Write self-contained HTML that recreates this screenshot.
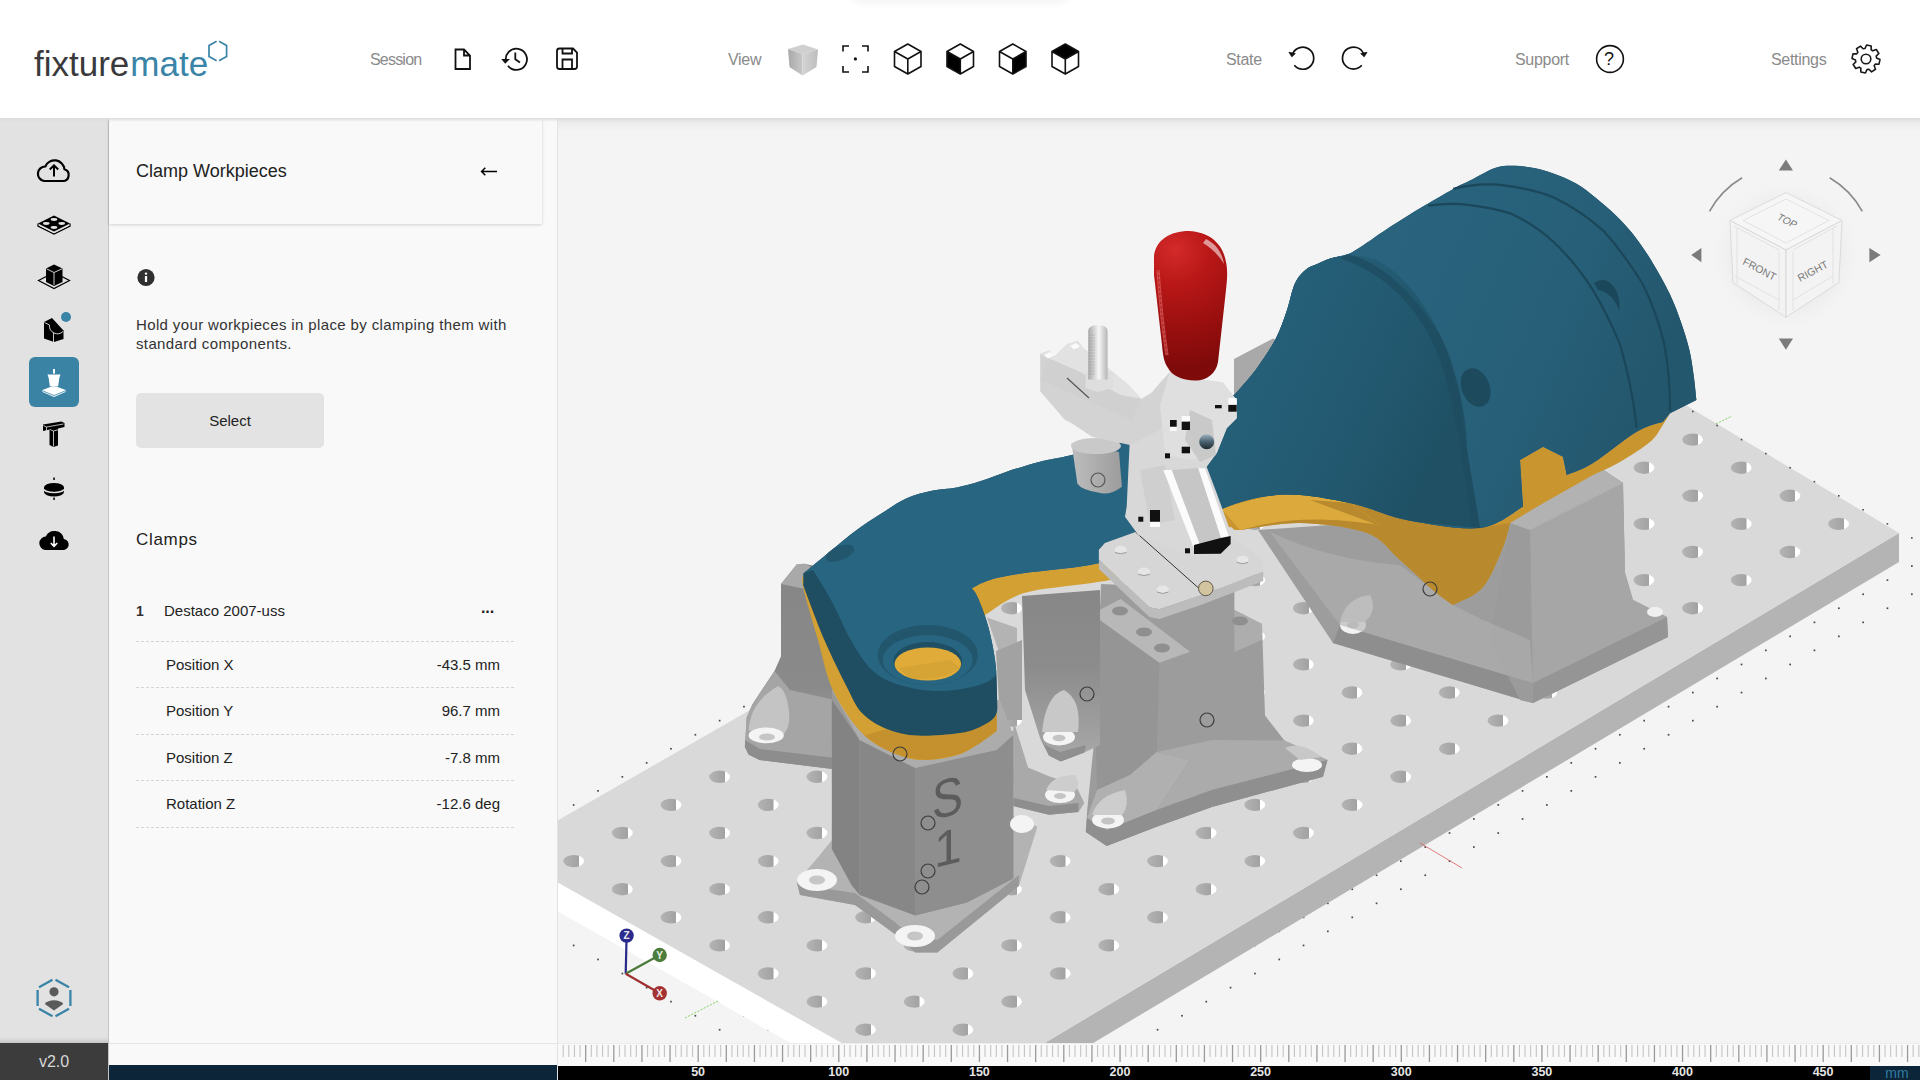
<!DOCTYPE html>
<html><head><meta charset="utf-8">
<style>
*{margin:0;padding:0;box-sizing:border-box}
html,body{width:1920px;height:1080px;overflow:hidden;background:#fff;font-family:"Liberation Sans",sans-serif;color:#222}
.abs{position:absolute}
#header{position:absolute;left:0;top:0;width:1920px;height:118px;background:#fff;z-index:5}
#hshadow{position:absolute;left:0;top:118px;width:1920px;height:4px;background:linear-gradient(#dcdcdc,rgba(0,0,0,0));z-index:6}
#vpshade{position:absolute;left:558px;top:118px;width:1362px;height:14px;background:linear-gradient(rgba(0,0,0,0.055),rgba(0,0,0,0));z-index:4}
#topdrop{position:absolute;left:850px;top:-14px;width:220px;height:14px;box-shadow:0 2px 9px rgba(0,0,0,0.06);border-radius:0 0 10px 10px;background:#fff;z-index:6}
.hl{position:absolute;top:50px;font-size:16px;color:#8a8a8a;line-height:20px;letter-spacing:-0.3px}
#side{position:absolute;left:0;top:118px;width:108px;height:925px;background:#e2e2e2}
#sideline{position:absolute;left:108px;top:118px;width:1px;height:962px;background:#c4c4c4}
#ver{position:absolute;left:0;top:1043px;width:108px;height:37px;background:#3c3c3c;color:#d8d8d8;font-size:16px;text-align:center;line-height:37px}
#panel{position:absolute;left:109px;top:118px;width:448px;height:962px;background:#f9f9f9}
#vp{position:absolute;left:558px;top:118px;width:1362px;height:962px;background:#f4f4f4;overflow:hidden}
#vline{position:absolute;left:557px;top:118px;width:1px;height:962px;background:#e2e2e2}
.t{position:absolute;white-space:nowrap}

</style></head><body>
<div id="header">
  <div class="t" style="left:34px;top:41.5px;font-size:35px;letter-spacing:0px;line-height:44px"><span id="fx" style="color:#3a3a3c">fixture</span><span id="mt" style="color:#3a84a8;margin-left:1px">mate</span></div>
  
  <svg class="abs" style="left:0;top:0" width="1920" height="118" viewBox="0 0 1920 118">
    <!-- logo hexagon -->
    <path d="M216.6,41.2 L209,45.6 V56.4 L216.6,60.8 M219,60.8 L226.6,56.4 V45.6 L219,41.2" fill="none" stroke="#3a84a8" stroke-width="1.7"/>
    <!-- doc -->
    <path d="M455.5,49.5 H464 L470,55.5 V69 H455.5 Z M464,49.5 V55.5 H470" fill="none" stroke="#111" stroke-width="1.8" stroke-linejoin="miter"/>
    <!-- history -->
    <path d="M506,61.5 A10.6,10.6 0 1 1 508,65.8" fill="none" stroke="#111" stroke-width="1.8"/>
    <path d="M502.5,59.5 L508.5,59.5 L505.3,62.8 Z" fill="#111" stroke="#111" stroke-width="1.2"/>
    <path d="M515.3,52.4 V59.3 L520,62.6" fill="none" stroke="#111" stroke-width="1.8"/>
    <!-- save -->
    <path d="M559.5,48.5 H573 L577,52.5 V66.5 A2.5,2.5 0 0 1 574.5,69 H559.5 A2.5,2.5 0 0 1 557,66.5 V51 A2.5,2.5 0 0 1 559.5,48.5 Z" fill="none" stroke="#111" stroke-width="1.8"/>
    <path d="M562.5,48.5 V53.5 H572 V48.5 M562.5,69 V59.5 H572 V69" fill="none" stroke="#111" stroke-width="1.8"/>
    <!-- gray cube -->
    <defs>
      <linearGradient id="cl" x1="0" x2="1"><stop offset="0" stop-color="#a8a8a8"/><stop offset="1" stop-color="#c8c8c8"/></linearGradient>
      <linearGradient id="cr" x1="0" x2="1"><stop offset="0" stop-color="#d4d4d4"/><stop offset="1" stop-color="#bdbdbd"/></linearGradient>
    </defs>
    <polygon points="788,49 803,44.5 818,49.5 802.5,54" fill="#cfcfcf"/>
    <polygon points="788,49 802.5,54 802.5,75.5 789.5,67" fill="url(#cl)"/>
    <polygon points="802.5,54 818,49.5 816.5,67 802.5,75.5" fill="url(#cr)"/>
    <!-- focus -->
    <path d="M843,51.5 V46 H849 M862,46 H868 V51.5 M843,66 V72 H849 M862,72 H868 V66" fill="none" stroke="#111" stroke-width="1.6"/>
    <circle cx="855.4" cy="58.9" r="1.6" fill="#111"/>
    <!-- wire cubes -->
    <g fill="none" stroke="#111" stroke-width="1.6" stroke-linejoin="round">
      <path d="M907.8,44 L921,51.5 L921,66.5 L907.8,74 L894.5,66.5 L894.5,51.5 Z M894.5,51.5 L907.8,59 L921,51.5 M907.8,59 V74"/>
    </g>
    <g transform="translate(52.5,0)">
      <path d="M894.5,51.5 L907.8,59 V74 L894.5,66.5 Z" fill="#000"/>
      <path d="M907.8,44 L921,51.5 L921,66.5 L907.8,74 L894.5,66.5 L894.5,51.5 Z M894.5,51.5 L907.8,59 L921,51.5 M907.8,59 V74" fill="none" stroke="#111" stroke-width="1.6" stroke-linejoin="round"/>
    </g>
    <g transform="translate(105,0)">
      <path d="M921,51.5 L907.8,59 V74 L921,66.5 Z" fill="#000"/>
      <path d="M907.8,44 L921,51.5 L921,66.5 L907.8,74 L894.5,66.5 L894.5,51.5 Z M894.5,51.5 L907.8,59 L921,51.5 M907.8,59 V74" fill="none" stroke="#111" stroke-width="1.6" stroke-linejoin="round"/>
    </g>
    <g transform="translate(157.5,0)">
      <path d="M907.8,44 L921,51.5 L907.8,59 L894.5,51.5 Z" fill="#000"/>
      <path d="M907.8,44 L921,51.5 L921,66.5 L907.8,74 L894.5,66.5 L894.5,51.5 Z M894.5,51.5 L907.8,59 L921,51.5 M907.8,59 V74" fill="none" stroke="#111" stroke-width="1.6" stroke-linejoin="round"/>
    </g>
    <!-- undo -->
    <path d="M1292.8,53.5 A11,11 0 1 1 1294.3,65.3" fill="none" stroke="#111" stroke-width="1.7"/>
    <path d="M1289,52.3 L1295.3,53.6 L1291.8,56.8 Z" fill="#111" stroke="#111" stroke-width="0.8" stroke-linejoin="round"/>
    <!-- redo -->
    <path d="M1363.5,53.5 A11,11 0 1 0 1361.8,65.3" fill="none" stroke="#111" stroke-width="1.7"/>
    <path d="M1367,52.3 L1360.7,53.6 L1364.2,56.8 Z" fill="#111" stroke="#111" stroke-width="0.8" stroke-linejoin="round"/>
    <!-- help -->
    <circle cx="1610" cy="59" r="13.4" fill="none" stroke="#111" stroke-width="1.6"/>
    <!-- gear -->
    <g transform="translate(1866,59)">
      <path id="gear" d="M10.56,-0.96 L13.99,0.55 L13.00,5.19 L9.25,5.17 L8.14,6.79 L9.50,10.28 L5.53,12.86 L2.89,10.20 L0.96,10.56 L-0.55,13.99 L-5.19,13.00 L-5.17,9.25 L-6.79,8.14 L-10.28,9.50 L-12.86,5.53 L-10.20,2.89 L-10.56,0.96 L-13.99,-0.55 L-13.00,-5.19 L-9.25,-5.17 L-8.14,-6.79 L-9.50,-10.28 L-5.53,-12.86 L-2.89,-10.20 L-0.96,-10.56 L0.55,-13.99 L5.19,-13.00 L5.17,-9.25 L6.79,-8.14 L10.28,-9.50 L12.86,-5.53 L10.20,-2.89 Z" fill="none" stroke="#1a1a1a" stroke-width="1.6" stroke-linejoin="round"/>
      <circle r="4.8" fill="none" stroke="#1a1a1a" stroke-width="1.6"/>
    </g>
  </svg>
  <div class="t" style="left:1604px;top:49px;font-size:18px;line-height:20px;color:#111">?</div>
  <div class="hl" style="left:370px;letter-spacing:-0.8px">Session</div>
  <div class="hl" style="left:728px">View</div>
  <div class="hl" style="left:1226px">State</div>
  <div class="hl" style="left:1515px">Support</div>
  <div class="hl" style="left:1771px">Settings</div>
</div>
<div id="hshadow"></div>
<div id="vpshade"></div>
<div id="topdrop"></div>
<div id="side"><svg class="abs" style="left:0;top:0" width="108" height="925" viewBox="0 118 108 925">
  <!-- cloud upload -->
  <path d="M44,181 H63 A6,6 0 0 0 64.5,169.3 A10,10 0 0 0 45.3,166.5 A7.3,7.3 0 0 0 44,181 Z" fill="none" stroke="#000" stroke-width="2.2" stroke-linejoin="round"/>
  <path d="M54,176.5 V165.5 M49.8,169.5 L54,165.3 L58.2,169.5" fill="none" stroke="#000" stroke-width="2"/>
  <!-- plate -->
  <path d="M38,223.5 L54,215.5 L70,223.5 L54,231.5 Z" fill="#000"/>
  <path d="M38,223.5 V226 L54,234 L70,226 V223.5" fill="none" stroke="#000" stroke-width="1.3"/>
  <path d="M38.5,225 L54,232.8 L69.5,225" fill="none" stroke="#e2e2e2" stroke-width="0.8"/>
  <ellipse cx="54" cy="219.5" rx="3.3" ry="1.4" fill="#e2e2e2"/>
  <ellipse cx="54" cy="227.5" rx="3.3" ry="1.4" fill="#e2e2e2"/>
  <ellipse cx="46.3" cy="223.5" rx="3.3" ry="1.4" fill="#e2e2e2"/>
  <ellipse cx="61.7" cy="223.5" rx="3.3" ry="1.4" fill="#e2e2e2"/>
  <!-- cube on plate -->
  <path d="M38.5,280.5 L54,272.5 L69.5,280.5 L54,288.5 Z" fill="none" stroke="#000" stroke-width="1.2"/>
  <path d="M46,268.5 L54,264.5 L62.5,268.5 V282 L54,286 L46,282 Z" fill="#000"/>
  <path d="M46.5,268.8 L54,272.5 L62,268.8 M54,272.5 V285" fill="none" stroke="#e2e2e2" stroke-width="0.9"/>
  <!-- workpiece -->
  <path d="M44,322 L52,318 L63.5,330.5 V339 L54,342 L44,338.5 Z" fill="#000"/>
  <path d="M44.5,322.5 L49.5,325 A8,8 0 0 0 63,331.5 M53.5,333 V342" fill="none" stroke="#e2e2e2" stroke-width="0.9"/>
  <circle cx="66" cy="317" r="5" fill="#3a84a8"/>
  <!-- active -->
  <rect x="29" y="357" width="50" height="50" rx="6" fill="#3a83a5"/>
  <path d="M53,369 H55 V373.5 H53 Z" fill="#fff"/>
  <path d="M47.5,374.5 H60.5 L59.3,378 L58.2,386 A5,1.8 0 0 1 49.8,386 L48.7,378 Z" fill="#fff"/>
  <path d="M42.5,390 L51.5,386.5 A6,1.8 0 0 0 56.5,386.5 L65.5,390 V392 L54,397 L42.5,392 Z" fill="#fff"/>
  <path d="M43,391 L54,395.5 L65,391" fill="none" stroke="#3a83a5" stroke-width="0.8"/>
  <!-- T -->
  <path d="M43,424.5 L61.5,421.5 L64.5,423 V427 L58,428.5 V445.5 L53.5,447 L49.5,445 V429.5 L43,431 Z" fill="#000"/>
  <path d="M43.5,425.5 L46.5,427 L63.5,424 M46.5,427 V430.5 M49.8,429.5 L53.5,431 V446.5 M53.5,431 L58,429.8" fill="none" stroke="#e2e2e2" stroke-width="0.8"/>
  <!-- disk -->
  <rect x="53.3" y="477.5" width="1.5" height="2.5" fill="#000"/>
  <rect x="53.3" y="497.5" width="1.5" height="2.5" fill="#000"/>
  <path d="M44,487.3 A10,4.3 0 0 1 64,487.3 V492 A10,4.6 0 0 1 44,492 Z" fill="#000"/>
  <path d="M44.2,489.2 A9.8,3.3 0 0 0 63.8,489.2" fill="none" stroke="#e2e2e2" stroke-width="1.6"/>
  <rect x="53.3" y="489" width="1.5" height="2.5" fill="#000"/>
  <!-- cloud download -->
  <path d="M45,550 H62.5 A5.5,5.5 0 0 0 63.8,539 A9.5,9.5 0 0 0 45.8,536.5 A6.8,6.8 0 0 0 45,550 Z" fill="#000"/>
  <path d="M54,536.5 V546 M50.8,543 L54,546.3 L57.2,543" fill="none" stroke="#fff" stroke-width="1.6"/>
  <!-- user hex -->
  <path d="M55.5,979.8 L69,987.3 M70.4,990 V1006 M69,1008.7 L55.5,1016.2 M52.5,1016.2 L39,1008.7 M37.6,1006 V990 M39,987.3 L52.5,979.8" fill="none" stroke="#3a84a8" stroke-width="2.3"/>
  <circle cx="54" cy="991.8" r="4.6" fill="#5a5a5a"/>
  <path d="M44.8,1004 A10.5,7 0 0 1 63.2,1004 L54,1010.5 Z" fill="#5a5a5a"/>
</svg></div>
<div id="sidesh" class="abs" style="left:0;top:1037px;width:108px;height:6px;background:linear-gradient(rgba(0,0,0,0),rgba(0,0,0,0.12))"></div>
<div id="sideline"></div>
<div id="ver">v2.0</div>
<div id="panel">
  <div class="abs" style="left:0;top:0;width:433px;height:106px;background:#f9f9f9;box-shadow:0 1px 3px rgba(0,0,0,0.16)"></div>
  <div class="t" style="left:27px;top:42px;font-size:18px;line-height:22px;color:#222">Clamp Workpieces</div>
  <svg class="abs" style="left:370px;top:45px" width="22" height="16"><path d="M2.5,8.5 H18 M6.3,4.8 L2.5,8.5 L6.3,12.3" fill="none" stroke="#000" stroke-width="1.4"/></svg>
  <svg class="abs" style="left:27px;top:150px" width="20" height="20"><circle cx="10" cy="9.5" r="8.6" fill="#303030"/><rect x="8.9" y="8" width="2.2" height="6" fill="#fff"/><circle cx="10" cy="5.6" r="1.2" fill="#fff"/></svg>
  <div class="t" style="left:27px;top:197px;font-size:15px;line-height:19px;color:#333;letter-spacing:0.37px">Hold your workpieces in place by clamping them with<br>standard components.</div>
  <div class="abs" style="left:27px;top:275px;width:188px;height:55px;background:#e3e3e3;border-radius:5px;font-size:15px;line-height:55px;text-align:center;color:#222">Select</div>
  <div class="t" style="left:27px;top:411px;font-size:17px;line-height:22px;color:#222;letter-spacing:0.7px">Clamps</div>
  <div class="t" style="left:27px;top:484px;font-size:14px;line-height:18px;color:#333;font-weight:bold">1</div>
  <div class="t" style="left:55px;top:484px;font-size:15px;line-height:18px;color:#222">Destaco 2007-uss</div>
  <div class="t" style="left:372px;top:484.5px;font-size:16px;line-height:18px;color:#222;letter-spacing:-1px;font-weight:bold">···</div>
  <div class="abs" style="left:27px;top:523px;width:378px;border-top:1px dashed #d4d4d4"></div>
  <div class="t" style="left:57px;top:538px;font-size:15px;line-height:18px;color:#222">Position X</div>
  <div class="t" style="right:57px;top:538px;font-size:15px;line-height:18px;color:#222">-43.5 mm</div>
  <div class="abs" style="left:27px;top:569px;width:378px;border-top:1px dashed #d4d4d4"></div>
  <div class="t" style="left:57px;top:584px;font-size:15px;line-height:18px;color:#222">Position Y</div>
  <div class="t" style="right:57px;top:584px;font-size:15px;line-height:18px;color:#222">96.7 mm</div>
  <div class="abs" style="left:27px;top:616px;width:378px;border-top:1px dashed #d4d4d4"></div>
  <div class="t" style="left:57px;top:631px;font-size:15px;line-height:18px;color:#222">Position Z</div>
  <div class="t" style="right:57px;top:631px;font-size:15px;line-height:18px;color:#222">-7.8 mm</div>
  <div class="abs" style="left:27px;top:662px;width:378px;border-top:1px dashed #d4d4d4"></div>
  <div class="t" style="left:57px;top:677px;font-size:15px;line-height:18px;color:#222">Rotation Z</div>
  <div class="t" style="right:57px;top:677px;font-size:15px;line-height:18px;color:#222">-12.6 deg</div>
  <div class="abs" style="left:27px;top:709px;width:378px;border-top:1px dashed #d4d4d4"></div>
  <div class="abs" style="left:0;top:925px;width:448px;height:1px;background:#e6e6e6"></div>
  <div class="abs" style="left:0;top:947px;width:448px;height:15px;background:#0c2538"></div>
</div>
<div id="vline"></div>
<div id="vp"><svg style="position:absolute;left:0;top:0" width="1362" height="925" viewBox="558 118 1362 925">
<defs>
<linearGradient id="hole" x1="0" x2="1"><stop offset="0" stop-color="#b4b4b4"/><stop offset="0.75" stop-color="#a2a2a2"/><stop offset="0.76" stop-color="#ffffff"/><stop offset="1" stop-color="#ffffff"/></linearGradient>
</defs>
<g fill="#4a4a4a"><rect x="1473.0" y="284.2" width="1.7" height="1.7"/><rect x="1448.7" y="298.3" width="1.7" height="1.7"/><rect x="1911.0" y="565.2" width="1.7" height="1.7"/><rect x="1424.4" y="312.3" width="1.7" height="1.7"/><rect x="1886.6" y="579.3" width="1.7" height="1.7"/><rect x="1911.0" y="593.4" width="1.7" height="1.7"/><rect x="1400.0" y="326.4" width="1.7" height="1.7"/><rect x="1862.3" y="593.4" width="1.7" height="1.7"/><rect x="1886.6" y="607.4" width="1.7" height="1.7"/><rect x="1375.7" y="340.4" width="1.7" height="1.7"/><rect x="1838.0" y="607.4" width="1.7" height="1.7"/><rect x="1862.3" y="621.5" width="1.7" height="1.7"/><rect x="1351.4" y="354.5" width="1.7" height="1.7"/><rect x="1813.6" y="621.5" width="1.7" height="1.7"/><rect x="1838.0" y="635.5" width="1.7" height="1.7"/><rect x="1327.0" y="368.5" width="1.7" height="1.7"/><rect x="1789.3" y="635.5" width="1.7" height="1.7"/><rect x="1813.6" y="649.5" width="1.7" height="1.7"/><rect x="1302.7" y="382.6" width="1.7" height="1.7"/><rect x="1765.0" y="649.5" width="1.7" height="1.7"/><rect x="1789.3" y="663.6" width="1.7" height="1.7"/><rect x="1278.4" y="396.6" width="1.7" height="1.7"/><rect x="1740.7" y="663.6" width="1.7" height="1.7"/><rect x="1765.0" y="677.6" width="1.7" height="1.7"/><rect x="1254.1" y="410.7" width="1.7" height="1.7"/><rect x="1716.3" y="677.6" width="1.7" height="1.7"/><rect x="1740.7" y="691.7" width="1.7" height="1.7"/><rect x="1229.7" y="424.7" width="1.7" height="1.7"/><rect x="1692.0" y="691.7" width="1.7" height="1.7"/><rect x="1716.3" y="705.8" width="1.7" height="1.7"/><rect x="1205.4" y="438.8" width="1.7" height="1.7"/><rect x="1667.7" y="705.8" width="1.7" height="1.7"/><rect x="1692.0" y="719.8" width="1.7" height="1.7"/><rect x="1181.1" y="452.8" width="1.7" height="1.7"/><rect x="1643.3" y="719.8" width="1.7" height="1.7"/><rect x="1667.7" y="733.9" width="1.7" height="1.7"/><rect x="1156.7" y="466.9" width="1.7" height="1.7"/><rect x="1619.0" y="733.9" width="1.7" height="1.7"/><rect x="1643.3" y="747.9" width="1.7" height="1.7"/><rect x="1132.4" y="480.9" width="1.7" height="1.7"/><rect x="1594.7" y="747.9" width="1.7" height="1.7"/><rect x="1619.0" y="762.0" width="1.7" height="1.7"/><rect x="1108.1" y="495.0" width="1.7" height="1.7"/><rect x="1570.4" y="762.0" width="1.7" height="1.7"/><rect x="1594.7" y="776.0" width="1.7" height="1.7"/><rect x="1083.8" y="509.0" width="1.7" height="1.7"/><rect x="1546.0" y="776.0" width="1.7" height="1.7"/><rect x="1570.4" y="790.0" width="1.7" height="1.7"/><rect x="1059.4" y="523.1" width="1.7" height="1.7"/><rect x="1521.7" y="790.0" width="1.7" height="1.7"/><rect x="1546.0" y="804.1" width="1.7" height="1.7"/><rect x="1035.1" y="537.1" width="1.7" height="1.7"/><rect x="1497.4" y="804.1" width="1.7" height="1.7"/><rect x="1521.7" y="818.1" width="1.7" height="1.7"/><rect x="1010.8" y="551.2" width="1.7" height="1.7"/><rect x="1473.0" y="818.1" width="1.7" height="1.7"/><rect x="1497.4" y="832.2" width="1.7" height="1.7"/><rect x="986.4" y="565.2" width="1.7" height="1.7"/><rect x="1448.7" y="832.2" width="1.7" height="1.7"/><rect x="1473.0" y="846.2" width="1.7" height="1.7"/><rect x="962.1" y="579.3" width="1.7" height="1.7"/><rect x="1424.4" y="846.2" width="1.7" height="1.7"/><rect x="1448.7" y="860.3" width="1.7" height="1.7"/><rect x="937.8" y="593.4" width="1.7" height="1.7"/><rect x="1400.0" y="860.3" width="1.7" height="1.7"/><rect x="1424.4" y="874.4" width="1.7" height="1.7"/><rect x="913.4" y="607.4" width="1.7" height="1.7"/><rect x="1375.7" y="874.4" width="1.7" height="1.7"/><rect x="1400.0" y="888.4" width="1.7" height="1.7"/><rect x="889.1" y="621.5" width="1.7" height="1.7"/><rect x="1351.4" y="888.4" width="1.7" height="1.7"/><rect x="1375.7" y="902.5" width="1.7" height="1.7"/><rect x="864.8" y="635.5" width="1.7" height="1.7"/><rect x="1327.0" y="902.5" width="1.7" height="1.7"/><rect x="1351.4" y="916.5" width="1.7" height="1.7"/><rect x="840.5" y="649.5" width="1.7" height="1.7"/><rect x="1302.7" y="916.5" width="1.7" height="1.7"/><rect x="1327.0" y="930.5" width="1.7" height="1.7"/><rect x="816.1" y="663.6" width="1.7" height="1.7"/><rect x="1278.4" y="930.5" width="1.7" height="1.7"/><rect x="1302.7" y="944.6" width="1.7" height="1.7"/><rect x="791.8" y="677.6" width="1.7" height="1.7"/><rect x="1254.1" y="944.6" width="1.7" height="1.7"/><rect x="1278.4" y="958.6" width="1.7" height="1.7"/><rect x="767.5" y="691.7" width="1.7" height="1.7"/><rect x="1229.7" y="958.6" width="1.7" height="1.7"/><rect x="1254.1" y="972.7" width="1.7" height="1.7"/><rect x="743.1" y="705.8" width="1.7" height="1.7"/><rect x="1205.4" y="972.7" width="1.7" height="1.7"/><rect x="1229.7" y="986.8" width="1.7" height="1.7"/><rect x="718.8" y="719.8" width="1.7" height="1.7"/><rect x="1181.1" y="986.8" width="1.7" height="1.7"/><rect x="1205.4" y="1000.8" width="1.7" height="1.7"/><rect x="694.5" y="733.9" width="1.7" height="1.7"/><rect x="1156.7" y="1000.8" width="1.7" height="1.7"/><rect x="1181.1" y="1014.9" width="1.7" height="1.7"/><rect x="670.1" y="747.9" width="1.7" height="1.7"/><rect x="1132.4" y="1014.9" width="1.7" height="1.7"/><rect x="1156.7" y="1028.9" width="1.7" height="1.7"/><rect x="645.8" y="762.0" width="1.7" height="1.7"/><rect x="1108.1" y="1028.9" width="1.7" height="1.7"/><rect x="621.5" y="776.0" width="1.7" height="1.7"/><rect x="597.2" y="790.0" width="1.7" height="1.7"/><rect x="572.8" y="804.1" width="1.7" height="1.7"/><rect x="572.8" y="916.5" width="1.7" height="1.7"/><rect x="597.2" y="930.5" width="1.7" height="1.7"/><rect x="572.8" y="944.6" width="1.7" height="1.7"/><rect x="621.5" y="944.6" width="1.7" height="1.7"/><rect x="597.2" y="958.6" width="1.7" height="1.7"/><rect x="645.8" y="958.6" width="1.7" height="1.7"/><rect x="621.5" y="972.7" width="1.7" height="1.7"/><rect x="670.1" y="972.7" width="1.7" height="1.7"/><rect x="645.8" y="986.8" width="1.7" height="1.7"/><rect x="694.5" y="986.8" width="1.7" height="1.7"/><rect x="670.1" y="1000.8" width="1.7" height="1.7"/><rect x="718.8" y="1000.8" width="1.7" height="1.7"/><rect x="694.5" y="1014.9" width="1.7" height="1.7"/><rect x="743.1" y="1014.9" width="1.7" height="1.7"/><rect x="718.8" y="1028.9" width="1.7" height="1.7"/><rect x="767.5" y="1028.9" width="1.7" height="1.7"/></g>
<polygon points="503.3,851.7 946.0,1101.9 946.0,1130.9 503.3,880.7" fill="#ffffff" />
<polygon points="946.0,1101.9 1899.0,533.0 1899.0,562.0 946.0,1130.9" fill="#b4b4b4" />
<polygon points="503.3,851.7 1488.0,286.5 1899.0,533.0 946.0,1101.9" fill="#d9d9d9" />
<ellipse cx="1498.0" cy="327.2" rx="10.4" ry="6.2" fill="url(#hole)"/>
<ellipse cx="1449.3" cy="355.3" rx="10.4" ry="6.2" fill="url(#hole)"/>
<ellipse cx="1400.7" cy="383.4" rx="10.4" ry="6.2" fill="url(#hole)"/>
<ellipse cx="1352.0" cy="411.5" rx="10.4" ry="6.2" fill="url(#hole)"/>
<ellipse cx="1303.4" cy="439.6" rx="10.4" ry="6.2" fill="url(#hole)"/>
<ellipse cx="1254.8" cy="467.7" rx="10.4" ry="6.2" fill="url(#hole)"/>
<ellipse cx="1206.1" cy="495.8" rx="10.4" ry="6.2" fill="url(#hole)"/>
<ellipse cx="1157.5" cy="523.9" rx="10.4" ry="6.2" fill="url(#hole)"/>
<ellipse cx="1108.8" cy="552.0" rx="10.4" ry="6.2" fill="url(#hole)"/>
<ellipse cx="1060.2" cy="580.1" rx="10.4" ry="6.2" fill="url(#hole)"/>
<ellipse cx="1011.5" cy="608.2" rx="10.4" ry="6.2" fill="url(#hole)"/>
<ellipse cx="962.9" cy="636.3" rx="10.4" ry="6.2" fill="url(#hole)"/>
<ellipse cx="914.2" cy="664.4" rx="10.4" ry="6.2" fill="url(#hole)"/>
<ellipse cx="865.5" cy="692.5" rx="10.4" ry="6.2" fill="url(#hole)"/>
<ellipse cx="816.9" cy="720.6" rx="10.4" ry="6.2" fill="url(#hole)"/>
<ellipse cx="768.2" cy="748.7" rx="10.4" ry="6.2" fill="url(#hole)"/>
<ellipse cx="719.6" cy="776.8" rx="10.4" ry="6.2" fill="url(#hole)"/>
<ellipse cx="671.0" cy="804.9" rx="10.4" ry="6.2" fill="url(#hole)"/>
<ellipse cx="622.3" cy="833.0" rx="10.4" ry="6.2" fill="url(#hole)"/>
<ellipse cx="573.7" cy="861.1" rx="10.4" ry="6.2" fill="url(#hole)"/>
<ellipse cx="1546.7" cy="355.3" rx="10.4" ry="6.2" fill="url(#hole)"/>
<ellipse cx="1498.0" cy="383.4" rx="10.4" ry="6.2" fill="url(#hole)"/>
<ellipse cx="1449.3" cy="411.5" rx="10.4" ry="6.2" fill="url(#hole)"/>
<ellipse cx="1400.7" cy="439.6" rx="10.4" ry="6.2" fill="url(#hole)"/>
<ellipse cx="1352.0" cy="467.7" rx="10.4" ry="6.2" fill="url(#hole)"/>
<ellipse cx="1303.4" cy="495.8" rx="10.4" ry="6.2" fill="url(#hole)"/>
<ellipse cx="1254.8" cy="523.9" rx="10.4" ry="6.2" fill="url(#hole)"/>
<ellipse cx="1206.1" cy="552.0" rx="10.4" ry="6.2" fill="url(#hole)"/>
<ellipse cx="1157.5" cy="580.1" rx="10.4" ry="6.2" fill="url(#hole)"/>
<ellipse cx="1108.8" cy="608.2" rx="10.4" ry="6.2" fill="url(#hole)"/>
<ellipse cx="1060.2" cy="636.3" rx="10.4" ry="6.2" fill="url(#hole)"/>
<ellipse cx="1011.5" cy="664.4" rx="10.4" ry="6.2" fill="url(#hole)"/>
<ellipse cx="962.9" cy="692.5" rx="10.4" ry="6.2" fill="url(#hole)"/>
<ellipse cx="914.2" cy="720.6" rx="10.4" ry="6.2" fill="url(#hole)"/>
<ellipse cx="865.5" cy="748.7" rx="10.4" ry="6.2" fill="url(#hole)"/>
<ellipse cx="816.9" cy="776.8" rx="10.4" ry="6.2" fill="url(#hole)"/>
<ellipse cx="768.2" cy="804.9" rx="10.4" ry="6.2" fill="url(#hole)"/>
<ellipse cx="719.6" cy="833.0" rx="10.4" ry="6.2" fill="url(#hole)"/>
<ellipse cx="671.0" cy="861.1" rx="10.4" ry="6.2" fill="url(#hole)"/>
<ellipse cx="622.3" cy="889.2" rx="10.4" ry="6.2" fill="url(#hole)"/>
<ellipse cx="1595.3" cy="383.4" rx="10.4" ry="6.2" fill="url(#hole)"/>
<ellipse cx="1546.7" cy="411.5" rx="10.4" ry="6.2" fill="url(#hole)"/>
<ellipse cx="1498.0" cy="439.6" rx="10.4" ry="6.2" fill="url(#hole)"/>
<ellipse cx="1449.3" cy="467.7" rx="10.4" ry="6.2" fill="url(#hole)"/>
<ellipse cx="1400.7" cy="495.8" rx="10.4" ry="6.2" fill="url(#hole)"/>
<ellipse cx="1352.0" cy="523.9" rx="10.4" ry="6.2" fill="url(#hole)"/>
<ellipse cx="1303.4" cy="552.0" rx="10.4" ry="6.2" fill="url(#hole)"/>
<ellipse cx="1254.8" cy="580.1" rx="10.4" ry="6.2" fill="url(#hole)"/>
<ellipse cx="1206.1" cy="608.2" rx="10.4" ry="6.2" fill="url(#hole)"/>
<ellipse cx="1157.5" cy="636.3" rx="10.4" ry="6.2" fill="url(#hole)"/>
<ellipse cx="1108.8" cy="664.4" rx="10.4" ry="6.2" fill="url(#hole)"/>
<ellipse cx="1060.2" cy="692.5" rx="10.4" ry="6.2" fill="url(#hole)"/>
<ellipse cx="1011.5" cy="720.6" rx="10.4" ry="6.2" fill="url(#hole)"/>
<ellipse cx="962.8" cy="748.7" rx="10.4" ry="6.2" fill="url(#hole)"/>
<ellipse cx="914.2" cy="776.8" rx="10.4" ry="6.2" fill="url(#hole)"/>
<ellipse cx="865.5" cy="804.9" rx="10.4" ry="6.2" fill="url(#hole)"/>
<ellipse cx="816.9" cy="833.0" rx="10.4" ry="6.2" fill="url(#hole)"/>
<ellipse cx="768.2" cy="861.1" rx="10.4" ry="6.2" fill="url(#hole)"/>
<ellipse cx="719.6" cy="889.2" rx="10.4" ry="6.2" fill="url(#hole)"/>
<ellipse cx="671.0" cy="917.3" rx="10.4" ry="6.2" fill="url(#hole)"/>
<ellipse cx="1643.9" cy="411.5" rx="10.4" ry="6.2" fill="url(#hole)"/>
<ellipse cx="1595.3" cy="439.6" rx="10.4" ry="6.2" fill="url(#hole)"/>
<ellipse cx="1546.7" cy="467.7" rx="10.4" ry="6.2" fill="url(#hole)"/>
<ellipse cx="1498.0" cy="495.8" rx="10.4" ry="6.2" fill="url(#hole)"/>
<ellipse cx="1449.3" cy="523.9" rx="10.4" ry="6.2" fill="url(#hole)"/>
<ellipse cx="1400.7" cy="552.0" rx="10.4" ry="6.2" fill="url(#hole)"/>
<ellipse cx="1352.0" cy="580.1" rx="10.4" ry="6.2" fill="url(#hole)"/>
<ellipse cx="1303.4" cy="608.2" rx="10.4" ry="6.2" fill="url(#hole)"/>
<ellipse cx="1254.8" cy="636.3" rx="10.4" ry="6.2" fill="url(#hole)"/>
<ellipse cx="1206.1" cy="664.4" rx="10.4" ry="6.2" fill="url(#hole)"/>
<ellipse cx="1157.4" cy="692.5" rx="10.4" ry="6.2" fill="url(#hole)"/>
<ellipse cx="1108.8" cy="720.6" rx="10.4" ry="6.2" fill="url(#hole)"/>
<ellipse cx="1060.1" cy="748.7" rx="10.4" ry="6.2" fill="url(#hole)"/>
<ellipse cx="1011.5" cy="776.8" rx="10.4" ry="6.2" fill="url(#hole)"/>
<ellipse cx="962.8" cy="804.9" rx="10.4" ry="6.2" fill="url(#hole)"/>
<ellipse cx="914.2" cy="833.0" rx="10.4" ry="6.2" fill="url(#hole)"/>
<ellipse cx="865.5" cy="861.1" rx="10.4" ry="6.2" fill="url(#hole)"/>
<ellipse cx="816.9" cy="889.2" rx="10.4" ry="6.2" fill="url(#hole)"/>
<ellipse cx="768.2" cy="917.3" rx="10.4" ry="6.2" fill="url(#hole)"/>
<ellipse cx="719.6" cy="945.4" rx="10.4" ry="6.2" fill="url(#hole)"/>
<ellipse cx="1692.6" cy="439.6" rx="10.4" ry="6.2" fill="url(#hole)"/>
<ellipse cx="1644.0" cy="467.7" rx="10.4" ry="6.2" fill="url(#hole)"/>
<ellipse cx="1595.3" cy="495.8" rx="10.4" ry="6.2" fill="url(#hole)"/>
<ellipse cx="1546.7" cy="523.9" rx="10.4" ry="6.2" fill="url(#hole)"/>
<ellipse cx="1498.0" cy="552.0" rx="10.4" ry="6.2" fill="url(#hole)"/>
<ellipse cx="1449.3" cy="580.1" rx="10.4" ry="6.2" fill="url(#hole)"/>
<ellipse cx="1400.7" cy="608.2" rx="10.4" ry="6.2" fill="url(#hole)"/>
<ellipse cx="1352.0" cy="636.3" rx="10.4" ry="6.2" fill="url(#hole)"/>
<ellipse cx="1303.4" cy="664.4" rx="10.4" ry="6.2" fill="url(#hole)"/>
<ellipse cx="1254.8" cy="692.5" rx="10.4" ry="6.2" fill="url(#hole)"/>
<ellipse cx="1206.1" cy="720.6" rx="10.4" ry="6.2" fill="url(#hole)"/>
<ellipse cx="1157.5" cy="748.7" rx="10.4" ry="6.2" fill="url(#hole)"/>
<ellipse cx="1108.8" cy="776.8" rx="10.4" ry="6.2" fill="url(#hole)"/>
<ellipse cx="1060.2" cy="804.9" rx="10.4" ry="6.2" fill="url(#hole)"/>
<ellipse cx="1011.5" cy="833.0" rx="10.4" ry="6.2" fill="url(#hole)"/>
<ellipse cx="962.9" cy="861.1" rx="10.4" ry="6.2" fill="url(#hole)"/>
<ellipse cx="914.2" cy="889.2" rx="10.4" ry="6.2" fill="url(#hole)"/>
<ellipse cx="865.6" cy="917.3" rx="10.4" ry="6.2" fill="url(#hole)"/>
<ellipse cx="816.9" cy="945.4" rx="10.4" ry="6.2" fill="url(#hole)"/>
<ellipse cx="768.2" cy="973.5" rx="10.4" ry="6.2" fill="url(#hole)"/>
<ellipse cx="1741.2" cy="467.7" rx="10.4" ry="6.2" fill="url(#hole)"/>
<ellipse cx="1692.6" cy="495.8" rx="10.4" ry="6.2" fill="url(#hole)"/>
<ellipse cx="1644.0" cy="523.9" rx="10.4" ry="6.2" fill="url(#hole)"/>
<ellipse cx="1595.3" cy="552.0" rx="10.4" ry="6.2" fill="url(#hole)"/>
<ellipse cx="1546.7" cy="580.1" rx="10.4" ry="6.2" fill="url(#hole)"/>
<ellipse cx="1498.0" cy="608.2" rx="10.4" ry="6.2" fill="url(#hole)"/>
<ellipse cx="1449.3" cy="636.3" rx="10.4" ry="6.2" fill="url(#hole)"/>
<ellipse cx="1400.7" cy="664.4" rx="10.4" ry="6.2" fill="url(#hole)"/>
<ellipse cx="1352.0" cy="692.5" rx="10.4" ry="6.2" fill="url(#hole)"/>
<ellipse cx="1303.4" cy="720.6" rx="10.4" ry="6.2" fill="url(#hole)"/>
<ellipse cx="1254.8" cy="748.7" rx="10.4" ry="6.2" fill="url(#hole)"/>
<ellipse cx="1206.1" cy="776.8" rx="10.4" ry="6.2" fill="url(#hole)"/>
<ellipse cx="1157.5" cy="804.9" rx="10.4" ry="6.2" fill="url(#hole)"/>
<ellipse cx="1108.8" cy="833.0" rx="10.4" ry="6.2" fill="url(#hole)"/>
<ellipse cx="1060.2" cy="861.1" rx="10.4" ry="6.2" fill="url(#hole)"/>
<ellipse cx="1011.5" cy="889.2" rx="10.4" ry="6.2" fill="url(#hole)"/>
<ellipse cx="962.9" cy="917.3" rx="10.4" ry="6.2" fill="url(#hole)"/>
<ellipse cx="914.2" cy="945.4" rx="10.4" ry="6.2" fill="url(#hole)"/>
<ellipse cx="865.6" cy="973.5" rx="10.4" ry="6.2" fill="url(#hole)"/>
<ellipse cx="816.9" cy="1001.6" rx="10.4" ry="6.2" fill="url(#hole)"/>
<ellipse cx="1789.9" cy="495.8" rx="10.4" ry="6.2" fill="url(#hole)"/>
<ellipse cx="1741.2" cy="523.9" rx="10.4" ry="6.2" fill="url(#hole)"/>
<ellipse cx="1692.6" cy="552.0" rx="10.4" ry="6.2" fill="url(#hole)"/>
<ellipse cx="1643.9" cy="580.1" rx="10.4" ry="6.2" fill="url(#hole)"/>
<ellipse cx="1595.3" cy="608.2" rx="10.4" ry="6.2" fill="url(#hole)"/>
<ellipse cx="1546.7" cy="636.3" rx="10.4" ry="6.2" fill="url(#hole)"/>
<ellipse cx="1498.0" cy="664.4" rx="10.4" ry="6.2" fill="url(#hole)"/>
<ellipse cx="1449.3" cy="692.5" rx="10.4" ry="6.2" fill="url(#hole)"/>
<ellipse cx="1400.7" cy="720.6" rx="10.4" ry="6.2" fill="url(#hole)"/>
<ellipse cx="1352.0" cy="748.7" rx="10.4" ry="6.2" fill="url(#hole)"/>
<ellipse cx="1303.4" cy="776.8" rx="10.4" ry="6.2" fill="url(#hole)"/>
<ellipse cx="1254.8" cy="804.9" rx="10.4" ry="6.2" fill="url(#hole)"/>
<ellipse cx="1206.1" cy="833.0" rx="10.4" ry="6.2" fill="url(#hole)"/>
<ellipse cx="1157.5" cy="861.1" rx="10.4" ry="6.2" fill="url(#hole)"/>
<ellipse cx="1108.8" cy="889.2" rx="10.4" ry="6.2" fill="url(#hole)"/>
<ellipse cx="1060.2" cy="917.3" rx="10.4" ry="6.2" fill="url(#hole)"/>
<ellipse cx="1011.5" cy="945.4" rx="10.4" ry="6.2" fill="url(#hole)"/>
<ellipse cx="962.9" cy="973.5" rx="10.4" ry="6.2" fill="url(#hole)"/>
<ellipse cx="914.2" cy="1001.6" rx="10.4" ry="6.2" fill="url(#hole)"/>
<ellipse cx="865.5" cy="1029.7" rx="10.4" ry="6.2" fill="url(#hole)"/>
<ellipse cx="1838.6" cy="523.9" rx="10.4" ry="6.2" fill="url(#hole)"/>
<ellipse cx="1789.9" cy="552.0" rx="10.4" ry="6.2" fill="url(#hole)"/>
<ellipse cx="1741.2" cy="580.1" rx="10.4" ry="6.2" fill="url(#hole)"/>
<ellipse cx="1692.6" cy="608.2" rx="10.4" ry="6.2" fill="url(#hole)"/>
<ellipse cx="1644.0" cy="636.3" rx="10.4" ry="6.2" fill="url(#hole)"/>
<ellipse cx="1595.3" cy="664.4" rx="10.4" ry="6.2" fill="url(#hole)"/>
<ellipse cx="1546.7" cy="692.5" rx="10.4" ry="6.2" fill="url(#hole)"/>
<ellipse cx="1498.0" cy="720.6" rx="10.4" ry="6.2" fill="url(#hole)"/>
<ellipse cx="1449.4" cy="748.7" rx="10.4" ry="6.2" fill="url(#hole)"/>
<ellipse cx="1400.7" cy="776.8" rx="10.4" ry="6.2" fill="url(#hole)"/>
<ellipse cx="1352.1" cy="804.9" rx="10.4" ry="6.2" fill="url(#hole)"/>
<ellipse cx="1303.4" cy="833.0" rx="10.4" ry="6.2" fill="url(#hole)"/>
<ellipse cx="1254.8" cy="861.1" rx="10.4" ry="6.2" fill="url(#hole)"/>
<ellipse cx="1206.1" cy="889.2" rx="10.4" ry="6.2" fill="url(#hole)"/>
<ellipse cx="1157.5" cy="917.3" rx="10.4" ry="6.2" fill="url(#hole)"/>
<ellipse cx="1108.8" cy="945.4" rx="10.4" ry="6.2" fill="url(#hole)"/>
<ellipse cx="1060.2" cy="973.5" rx="10.4" ry="6.2" fill="url(#hole)"/>
<ellipse cx="1011.5" cy="1001.6" rx="10.4" ry="6.2" fill="url(#hole)"/>
<ellipse cx="962.9" cy="1029.7" rx="10.4" ry="6.2" fill="url(#hole)"/>
<ellipse cx="914.2" cy="1057.8" rx="10.4" ry="6.2" fill="url(#hole)"/>
<g fill="#4a4a4a"><rect x="1473.0" y="284.2" width="1.6" height="1.6"/><rect x="1497.4" y="298.3" width="1.6" height="1.6"/><rect x="1521.7" y="312.3" width="1.6" height="1.6"/><rect x="1546.0" y="326.4" width="1.6" height="1.6"/><rect x="1570.4" y="340.4" width="1.6" height="1.6"/><rect x="1594.7" y="354.5" width="1.6" height="1.6"/><rect x="1619.0" y="368.5" width="1.6" height="1.6"/><rect x="1643.3" y="382.6" width="1.6" height="1.6"/><rect x="1667.7" y="396.6" width="1.6" height="1.6"/><rect x="1692.0" y="410.7" width="1.6" height="1.6"/><rect x="1716.3" y="424.7" width="1.6" height="1.6"/><rect x="1740.7" y="438.8" width="1.6" height="1.6"/><rect x="1765.0" y="452.8" width="1.6" height="1.6"/><rect x="1789.3" y="466.9" width="1.6" height="1.6"/><rect x="1813.6" y="480.9" width="1.6" height="1.6"/><rect x="1838.0" y="495.0" width="1.6" height="1.6"/><rect x="1862.3" y="509.0" width="1.6" height="1.6"/><rect x="1886.6" y="523.1" width="1.6" height="1.6"/><rect x="1911.0" y="537.1" width="1.6" height="1.6"/></g>
<!-- ============ RIGHT PEDESTAL ============ -->
<!-- back block behind blue (top left visible part) -->
<polygon points="1234,359 1273,338.5 1300,352 1300,420 1234,430" fill="#a9a9a9"/>
<!-- base foot -->
<path d="M1258,530 L1333,643 L1533,703 L1668,637 L1667,617 L1633,600 L1625,573 L1623,483 L1593,463 L1510,523 L1400,520 Z" fill="#9d9d9d"/>
<path d="M1333,643 L1533,703 L1533,683 L1340,625 Z" fill="#8e8e8e"/>
<path d="M1533,703 L1668,637 L1667,617 L1533,683 Z" fill="#959595"/>
<!-- right block front face -->
<path d="M1510,523 L1530,520 L1530,600 L1533,683 L1533,703 L1520,700 L1490,640 Z" fill="#9b9b9b"/>
<path d="M1530,520 L1593,463 L1623,483 L1625,573 L1633,600 L1667,617 L1533,683 Z" fill="#a6a6a6"/>
<path d="M1510,523 L1580,470 L1593,463 L1623,483 L1530,530 Z" fill="#b2b2b2"/>
<!-- foot holes -->
<ellipse cx="1353" cy="625" rx="13" ry="9" fill="#f2f2f2"/>
<ellipse cx="1353" cy="625" rx="6" ry="3.5" fill="#c8c8c8"/>
<path d="M1340,622 Q1345,598 1370,595 Q1378,610 1365,622 Z" fill="#cfcfcf"/>
<ellipse cx="1655" cy="612" rx="8" ry="5" fill="#f0f0f0"/>
<!-- curved inner shading of base -->
<path d="M1270,532 Q1330,560 1400,565 L1453,605 L1483,620 L1530,640 L1533,683 L1340,625 Z" fill="#b1b1b1" opacity="0.6"/>

<!-- ============ CENTER PEDESTAL ============ -->
<path d="M1099.7,618 L1095.6,726.7 L1087.2,810 L1085.8,832 L1106.7,846 L1156.7,826.7 L1212,807 L1323,776.7 L1327.5,760 L1284.4,740.6 L1265,715.6 L1262,624 L1234.4,610 L1234.4,590 L1101,584 Z" fill="#9c9c9c"/>
<!-- left face darker -->
<path d="M1099.7,618 L1159.4,662.8 L1156.7,752 L1130,775 L1097,790 L1095.6,726.7 Z" fill="#959595"/>
<path d="M1097,790 L1130,775 L1156.7,752 L1190,760 L1156.7,810 L1106.7,830 L1087,818 Z" fill="#b0b0b0"/>
<path d="M1156.7,752 L1212,740 L1284.4,740.6 L1327.5,760 L1212,790 L1156.7,810 L1190,760 Z" fill="#ababab"/>
<!-- foot bottom edge -->
<path d="M1085.8,832 L1106.7,846 L1156.7,826.7 L1212,807 L1323,776.7 L1327.5,760 L1212,790 L1156.7,810 L1106.7,830 L1087,818 Z" fill="#8f8f8f"/>
<!-- top plates -->
<polygon points="1099.7,610 1120.6,598.9 1190,651.7 1159.4,662.8 1099.7,620" fill="#b8b8b8"/>
<polygon points="1234.4,610 1262,624 1262,640 1234.4,652" fill="#adadad"/>
<ellipse cx="1120" cy="611" rx="8" ry="4.5" fill="#8f8f8f"/>
<ellipse cx="1144" cy="632" rx="8" ry="4.5" fill="#8f8f8f"/>
<ellipse cx="1162" cy="648" rx="8" ry="4.5" fill="#8f8f8f"/>
<ellipse cx="1240" cy="621" rx="8" ry="4.5" fill="#8f8f8f"/>
<!-- washers -->
<ellipse cx="1108" cy="820" rx="16" ry="8.5" fill="#f4f4f4"/><ellipse cx="1108" cy="821" rx="7" ry="3.5" fill="#c4c4c4"/>
<path d="M1092,815 Q1098,795 1125,790 Q1130,805 1122,815 Z" fill="#cdcdcd"/>
<ellipse cx="1307" cy="765" rx="15" ry="7" fill="#f4f4f4"/>
<path d="M1285,748 Q1300,740 1322,757 L1300,760 Z" fill="#c8c8c8"/>

<!-- ============ MIDDLE PEDESTAL (between S1 and center) ============ -->
<defs><linearGradient id="midcol" x1="0" y1="0" x2="0" y2="1"><stop offset="0" stop-color="#878787"/><stop offset="0.45" stop-color="#8c8c8c"/><stop offset="1" stop-color="#a9a9a9"/></linearGradient></defs>
<path d="M987,617.6 L1017,628 L1017,651 L1000,655 Z" fill="#b3b3b3"/>
<path d="M996,651 L1022,640 L1022,720 L1000,720 Z" fill="#a2a2a2"/>
<path d="M1022,596 L1100,590 L1100,745 L1084.4,752.6 L1060.7,761.5 L1048.9,755.6 L1040,737.8 L1025,690 Z" fill="url(#midcol)"/>
<path d="M1013.3,720 L1028,767.4 L1048.9,776.3 L1075.6,785 L1084.4,803 L1078.5,811.9 L1048.9,814.8 L1013.3,806 Z" fill="#a9a9a9"/>
<path d="M1013.3,798 L1048.9,806 L1078.5,803 L1078.5,811.9 L1048.9,814.8 L1013.3,806 Z" fill="#8e8e8e"/>
<ellipse cx="1060" cy="795" rx="15" ry="8" fill="#f4f4f4"/><ellipse cx="1060" cy="796" rx="6" ry="3" fill="#c4c4c4"/>
<path d="M1046,790 Q1052,775 1075,775 Q1082,785 1074,792 Z" fill="#cdcdcd"/>
<ellipse cx="1059" cy="737" rx="16" ry="8.5" fill="#f4f4f4"/><ellipse cx="1059" cy="738" rx="6.5" ry="3.2" fill="#c4c4c4"/>
<path d="M1042,732 Q1046,695 1064,690 Q1082,700 1078,732 Z" fill="#c8c8c8"/>
<path d="M1040,737.8 L1048.9,755.6 L1060.7,761.5 L1084.4,752.6 L1086,745 L1060,752 L1045,745 Z" fill="#8f8f8f"/>

<!-- ============ BACK-LEFT PEDESTAL ============ -->
<defs><linearGradient id="blcol" x1="0" y1="0" x2="0" y2="1"><stop offset="0" stop-color="#868686"/><stop offset="0.6" stop-color="#8a8a8a"/><stop offset="1" stop-color="#a6a6a6"/></linearGradient></defs>
<path d="M781,584 L796.7,564.6 L804,563.7 L835,570 L835,769.3 L759.6,760 L748.6,754.4 L744.9,747 L746.7,717.4 L752.3,704.4 L774.5,671 L781,656.3 Z" fill="url(#blcol)"/>
<path d="M781,584 L796.7,564.6 L804,563.7 L810,566 L810,590 Z" fill="#a9a9a9"/>
<path d="M746.7,717.4 L752.3,704.4 L774.5,671 L790,690 L835,700 L835,769.3 L759.6,760 L748.6,754.4 L744.9,747 Z" fill="#a5a5a5"/>
<path d="M744.9,747 L748.6,754.4 L759.6,760 L835,769.3 L835,758 L760,749 L745,740 Z" fill="#8d8d8d"/>
<path d="M748.6,730.4 C750,712 758,698 778.2,686 C786,690 789,705 789.3,717.4 C789,726 787,730 783.8,734 Z" fill="#c4c4c4"/>
<ellipse cx="766.2" cy="735.4" rx="17.6" ry="7.9" fill="#f4f4f4"/><ellipse cx="767" cy="737" rx="8" ry="3.6" fill="#c6c6c6"/>

<!-- ============ S1 PEDESTAL ============ -->
<!-- foot -->
<path d="M796.7,882 L818.9,856.3 L832,840 L1011.5,815.6 L1037.4,826.7 L1018.9,886 L937.4,952.6 L915.2,952.6 L894.8,934 L855,905 L800,895 Z" fill="#b3b3b3"/>
<path d="M796.7,882 L800,895 L855,905 L894.8,934 L915.2,952.6 L937.4,952.6 L1018.9,886 L1018.9,875 L937.4,940 L915.2,940 L894.8,922 L855,893 L800,885 Z" fill="#999999"/>
<!-- column -->
<path d="M831.9,689.6 L859.6,730.4 L915.2,760 L996.7,749 L1013.3,730.4 L1013.3,878.5 L967,902.6 L915.2,915.6 L852.2,886 L831.9,848.9 Z" fill="#999999"/>
<path d="M831.9,700 L859.6,740 L859.6,895 L852.2,886 L831.9,848.9 Z" fill="#838383"/>
<path d="M859.6,740 L915.2,768 L915.2,915.6 L859.6,895 Z" fill="#878787"/>
<path d="M915.2,768 L996.7,750 L1013.3,735 L1013.3,878.5 L967,902.6 L915.2,915.6 Z" fill="#8e8e8e"/>
<path d="M831.9,690 L859.6,740 L915.2,768 L996.7,750 L1013.3,735 L1000,700 Z" fill="#acacac"/>
<!-- washers -->
<ellipse cx="817" cy="880" rx="20" ry="11" fill="#f4f4f4"/><ellipse cx="817" cy="880" rx="8" ry="4.5" fill="#c6c6c6"/>
<ellipse cx="915" cy="936" rx="20" ry="11" fill="#f4f4f4"/><ellipse cx="915" cy="936" rx="8" ry="4.5" fill="#c6c6c6"/>
<ellipse cx="1022" cy="824" rx="12" ry="9" fill="#f4f4f4"/>
<!-- S1 text -->
<g fill="#5c5c5c" font-family="Liberation Sans">
<text transform="translate(932,820) skewY(-14)" font-size="54" textLength="31" lengthAdjust="spacingAndGlyphs">S</text>
<text transform="translate(934,868) skewY(-14)" font-size="50">1</text>
</g>

<defs>
<linearGradient id="bluecyl" x1="0" y1="0" x2="1" y2="0.3">
<stop offset="0" stop-color="#25607a"/><stop offset="0.45" stop-color="#29637d"/><stop offset="0.8" stop-color="#275f78"/><stop offset="1" stop-color="#23576d"/></linearGradient>
</defs>
<path d="M1140.0,552.0 C1153.6,544.8 1197.7,518.5 1221.5,508.9 C1245.3,499.3 1261.6,495.6 1283.0,494.6 C1304.4,493.6 1329.4,498.8 1350.0,503.0 C1370.6,507.2 1385.0,515.8 1406.7,520.0 C1428.4,524.2 1460.6,530.2 1480.0,528.0 C1499.4,525.8 1515.8,510.2 1523.0,506.7 L1520.0,460.0 L1543.0,446.7 L1563.0,456.7 L1566.7,475.0 C1571.1,473.0 1581.3,470.2 1593.0,463.0 C1604.7,455.8 1625.0,438.6 1636.7,431.7 C1648.4,424.8 1658.6,423.4 1663.0,421.7 L1670.0,413.3 C1668.5,415.8 1664.3,423.2 1661.0,428.0 C1657.7,432.8 1656.8,436.3 1650.0,442.0 C1643.2,447.7 1629.5,456.5 1620.0,462.0 C1610.5,467.5 1597.5,472.8 1593.0,475.0 L1540.0,505.0 L1510.0,523.0 C1508.8,527.0 1507.5,536.3 1503.0,547.0 C1498.5,557.7 1491.3,577.3 1483.0,587.0 C1474.7,596.7 1458.0,602.0 1453.0,605.0 C1449.7,602.5 1441.8,597.5 1433.0,590.0 C1424.2,582.5 1411.0,569.5 1400.0,560.0 C1389.0,550.5 1383.7,539.2 1367.0,533.0 C1350.3,526.8 1321.2,523.5 1300.0,523.0 C1278.8,522.5 1253.1,528.8 1240.0,530.0 C1226.9,531.2 1238.2,522.5 1221.5,530.0 C1204.8,537.5 1153.6,567.5 1140.0,575.0 L1140.0,552.0 Z" fill="#c9952f"/>
<path d="M1240.0,530.0 C1250.0,528.8 1278.8,522.5 1300.0,523.0 C1321.2,523.5 1350.3,526.8 1367.0,533.0 C1383.7,539.2 1389.0,550.5 1400.0,560.0 C1411.0,569.5 1424.2,582.5 1433.0,590.0 C1441.8,597.5 1449.7,602.5 1453.0,605.0 C1458.0,602.0 1474.7,596.7 1483.0,587.0 C1491.3,577.3 1498.5,557.7 1503.0,547.0 C1507.5,536.3 1508.8,527.0 1510.0,523.0 L1480.0,528.0 C1467.8,526.7 1428.4,524.2 1406.7,520.0 C1385.0,515.8 1370.6,507.2 1350.0,503.0 C1329.4,498.8 1304.4,493.6 1283.0,494.6 C1261.6,495.6 1231.8,506.5 1221.5,508.9 L1240.0,530.0 Z" fill="#b98a2d"/>
<path d="M1221.5,508.9 C1250,500 1270,495 1283,494.6 C1310,495 1330,498 1350,503 L1380,525 C1330,518 1290,516 1240,530 Z" fill="#dcaa3c"/>
<path d="M1310,500 L1350,503 L1400,540 L1383,527 Z" fill="#b98a2d"/>
<path d="M803.3,575.0 C803.3,577.2 800.8,577.2 803.3,588.0 C805.8,598.8 813.0,622.8 818.0,640.0 C823.0,657.2 825.6,675.1 833.3,691.0 C841.0,706.9 853.3,724.8 864.4,735.6 C875.5,746.4 889.6,751.5 900.0,755.6 C910.4,759.7 916.3,760.4 926.7,760.0 C937.1,759.6 950.5,758.1 962.2,753.3 C973.9,748.5 991.0,734.7 996.7,731.0 L996.7,690.0 L985.0,615.0 C991.4,611.4 1005.8,598.6 1023.3,593.3 C1040.8,588.0 1070.5,586.3 1090.0,583.3 C1109.5,580.2 1131.7,576.4 1140.0,575.0 L1140.0,552.0 C1131.7,554.2 1109.5,561.5 1090.0,565.0 C1070.5,568.5 1040.0,570.8 1023.3,573.3 C1006.6,575.8 998.6,577.5 990.0,580.0 C981.4,582.5 974.8,586.9 971.7,588.3 L803.3,575.0 Z" fill="#d3a033"/>
<path d="M864.4,735.6 C880,748 890,752 900,755.6 C910,758 920,760 926.7,760 C940,759 950,757 962.2,753.3 C975,747 985,740 996.7,731 L996.7,715 C985,725 975,730 957.8,733.3 C940,736 930,736 917.8,735.6 C905,734 895,732 886.7,728.9 Z" fill="#c4912e"/>
<path d="M803.3,573.3 C804.7,572.2 807.0,570.6 811.7,566.7 C816.4,562.8 824.2,556.1 831.7,550.0 C839.2,543.9 848.4,536.1 856.7,530.0 C865.0,523.9 873.4,518.6 881.7,513.3 C890.0,508.0 898.4,502.1 906.7,498.3 C915.0,494.6 923.4,492.6 931.7,490.8 C940.0,489.0 948.4,489.2 956.7,487.5 C965.0,485.8 973.4,483.4 981.7,480.8 C990.0,478.2 997.0,474.9 1006.7,471.7 C1016.4,468.5 1029.2,464.5 1040.0,461.7 C1050.8,458.9 1055.0,459.1 1071.7,455.0 C1088.4,450.9 1118.6,444.2 1140.0,437.0 C1161.4,429.8 1184.3,419.0 1200.0,412.0 C1215.7,405.0 1228.7,397.7 1234.4,394.8 C1238.0,390.6 1249.1,378.7 1256.0,369.4 C1262.9,360.1 1270.5,348.6 1275.6,338.9 C1280.7,329.2 1283.5,320.3 1286.7,311.0 C1289.9,301.7 1291.8,290.2 1295.0,283.3 C1298.2,276.4 1302.3,272.6 1306.0,269.4 C1309.7,266.2 1313.0,265.8 1317.2,263.9 C1321.4,262.0 1325.9,259.9 1331.0,258.3 C1336.1,256.7 1342.2,256.5 1347.8,254.2 C1353.4,251.9 1357.9,248.6 1364.4,244.4 C1370.9,240.2 1377.4,235.2 1386.7,229.2 C1396.0,223.2 1408.9,215.0 1420.0,208.3 C1431.1,201.6 1445.0,193.5 1453.3,188.9 C1461.6,184.3 1463.0,184.1 1470.0,180.6 C1477.0,177.1 1487.6,170.5 1495.0,168.0 C1502.4,165.5 1507.9,165.8 1514.4,165.8 C1520.9,165.8 1527.4,166.7 1533.9,168.0 C1540.4,169.3 1546.3,171.0 1553.3,173.6 C1560.2,176.2 1568.6,179.4 1575.6,183.3 C1582.5,187.2 1588.1,191.6 1595.0,197.2 C1601.9,202.8 1610.2,209.8 1617.2,216.7 C1624.2,223.6 1630.7,231.0 1636.7,238.9 C1642.7,246.8 1647.8,254.6 1653.3,263.9 C1658.8,273.1 1665.4,284.7 1670.0,294.4 C1674.6,304.1 1677.8,312.9 1681.0,322.2 C1684.2,331.5 1687.3,341.2 1689.4,350.0 C1691.5,358.8 1692.4,366.7 1693.6,375.0 C1694.8,383.3 1695.9,395.8 1696.4,400.0 L1670.0,413.3 L1663.0,421.7 C1658.6,423.4 1648.4,424.8 1636.7,431.7 C1625.0,438.6 1604.7,455.8 1593.0,463.0 C1581.3,470.2 1571.1,473.0 1566.7,475.0 L1563.0,456.7 L1543.0,446.7 L1520.0,460.0 L1523.0,506.7 C1515.8,510.2 1499.4,525.8 1480.0,528.0 C1460.6,530.2 1428.4,524.2 1406.7,520.0 C1385.0,515.8 1370.6,507.2 1350.0,503.0 C1329.4,498.8 1304.4,493.6 1283.0,494.6 C1261.6,495.6 1245.3,499.3 1221.5,508.9 C1197.7,518.5 1153.6,544.8 1140.0,552.0 C1131.7,554.2 1109.5,561.5 1090.0,565.0 C1070.5,568.5 1040.0,570.8 1023.3,573.3 C1006.6,575.8 998.6,577.5 990.0,580.0 C981.4,582.5 974.8,586.9 971.7,588.3 C972.8,589.9 975.1,591.2 978.0,598.0 C980.9,604.8 986.0,617.8 988.9,628.9 C991.8,640.0 994.2,653.3 995.6,664.4 C997.0,675.5 997.0,687.1 997.0,695.6 C997.0,704.1 998.4,710.4 995.6,715.6 C992.8,720.8 986.3,724.0 980.0,727.0 C973.7,730.0 968.2,731.9 957.8,733.3 C947.4,734.7 929.6,736.3 917.8,735.6 C905.9,734.9 896.0,732.6 886.7,728.9 C877.4,725.2 868.9,720.3 862.2,713.3 C855.5,706.3 853.0,698.9 846.7,686.7 C840.4,674.5 831.4,656.1 824.4,640.0 C817.4,623.9 808.5,599.3 805.0,590.0 C801.5,580.7 803.6,585.3 803.3,584.4 L803.3,573.3 Z" fill="#1f4d62"/>
<path d="M1140.0,437.0 C1150.0,432.8 1184.3,419.0 1200.0,412.0 C1215.7,405.0 1228.7,397.7 1234.4,394.8 C1238.0,390.6 1249.1,378.7 1256.0,369.4 C1262.9,360.1 1270.5,348.6 1275.6,338.9 C1280.7,329.2 1283.5,320.3 1286.7,311.0 C1289.9,301.7 1291.8,290.2 1295.0,283.3 C1298.2,276.4 1302.3,272.6 1306.0,269.4 C1309.7,266.2 1313.0,265.8 1317.2,263.9 C1321.4,262.0 1325.9,259.9 1331.0,258.3 C1336.1,256.7 1342.2,256.5 1347.8,254.2 C1353.4,251.9 1357.9,248.6 1364.4,244.4 C1370.9,240.2 1377.4,235.2 1386.7,229.2 C1396.0,223.2 1408.9,215.0 1420.0,208.3 C1431.1,201.6 1445.0,193.5 1453.3,188.9 C1461.6,184.3 1463.0,184.1 1470.0,180.6 C1477.0,177.1 1487.6,170.5 1495.0,168.0 C1502.4,165.5 1507.9,165.8 1514.4,165.8 C1520.9,165.8 1527.4,166.7 1533.9,168.0 C1540.4,169.3 1546.3,171.0 1553.3,173.6 C1560.2,176.2 1568.6,179.4 1575.6,183.3 C1582.5,187.2 1588.1,191.6 1595.0,197.2 C1601.9,202.8 1610.2,209.8 1617.2,216.7 C1624.2,223.6 1630.7,231.0 1636.7,238.9 C1642.7,246.8 1647.8,254.6 1653.3,263.9 C1658.8,273.1 1665.4,284.7 1670.0,294.4 C1674.6,304.1 1677.8,312.9 1681.0,322.2 C1684.2,331.5 1687.3,341.2 1689.4,350.0 C1691.5,358.8 1692.4,366.7 1693.6,375.0 C1694.8,383.3 1695.9,395.8 1696.4,400.0 L1670.0,413.3 L1663.0,421.7 C1658.6,423.4 1648.4,424.8 1636.7,431.7 C1625.0,438.6 1604.7,455.8 1593.0,463.0 C1581.3,470.2 1571.1,473.0 1566.7,475.0 L1563.0,456.7 L1543.0,446.7 L1520.0,460.0 L1523.0,506.7 C1515.8,510.2 1499.4,525.8 1480.0,528.0 C1460.6,530.2 1428.4,524.2 1406.7,520.0 C1385.0,515.8 1370.6,507.2 1350.0,503.0 C1329.4,498.8 1304.4,493.6 1283.0,494.6 C1261.6,495.6 1245.3,499.3 1221.5,508.9 C1197.7,518.5 1153.6,544.8 1140.0,552.0 L1140.0,437.0 Z" fill="url(#bluecyl)"/>
<defs><linearGradient id="frontg" x1="1250" y1="300" x2="1470" y2="400" gradientUnits="userSpaceOnUse"><stop offset="0" stop-color="#25607a"/><stop offset="0.55" stop-color="#235a71"/><stop offset="1" stop-color="#1f5064"/></linearGradient></defs>
<path d="M1140.0,437.0 C1150.0,432.8 1184.3,419.0 1200.0,412.0 C1215.7,405.0 1228.7,397.7 1234.4,394.8 C1238.0,390.6 1249.1,378.7 1256.0,369.4 C1262.9,360.1 1270.5,348.6 1275.6,338.9 C1280.7,329.2 1283.5,320.3 1286.7,311.0 C1289.9,301.7 1291.8,290.2 1295.0,283.3 C1298.2,276.4 1302.3,272.6 1306.0,269.4 C1309.7,266.2 1313.0,265.8 1317.2,263.9 C1321.4,262.0 1325.9,259.9 1331.0,258.3 C1336.1,256.7 1345.0,254.9 1347.8,254.2 C1353.2,255.5 1369.3,256.0 1380.0,262.0 C1390.7,268.0 1402.0,277.8 1412.0,290.0 C1422.0,302.2 1432.3,318.3 1440.0,335.0 C1447.7,351.7 1453.5,370.8 1458.0,390.0 C1462.5,409.2 1463.3,427.0 1467.0,450.0 C1470.7,473.0 1477.8,515.0 1480.0,528.0 C1467.8,526.7 1428.4,524.2 1406.7,520.0 C1385.0,515.8 1370.6,507.2 1350.0,503.0 C1329.4,498.8 1304.4,493.6 1283.0,494.6 C1261.6,495.6 1245.3,499.3 1221.5,508.9 C1197.7,518.5 1153.6,544.8 1140.0,552.0 L1140.0,437.0 Z" fill="url(#frontg)"/>
<path d="M1347.8,254.2 C1380,262 1412,290 1440,335 C1458,370 1467,420 1467,450 L1480,528 L1472,527 C1464,470 1456,410 1441,362 C1422,312 1392,277 1340,258 Z" fill="#1e4c60" opacity="0.8"/>
<path d="M1453.3,188.9 Q1475,183 1497.8,184.7 Q1530,188 1553.3,197.2 Q1580,210 1603.3,230.6 Q1625,255 1642.2,283.3 Q1656,310 1664.4,344.4 Q1670,375 1670,411" fill="none" stroke="#1b475a" stroke-width="2.2"/>
<path d="M1428.3,205.6 Q1445,203 1461.7,204.2 Q1490,207 1511.7,213.9 Q1535,225 1553.3,241.7 Q1575,262 1592.2,288.9 Q1608,315 1620,344.4 Q1632,385 1636.7,427.8" fill="none" stroke="#1b475a" stroke-width="2.2"/>
<ellipse cx="1475.6" cy="387.5" rx="14" ry="20" fill="#1d4a5d" transform="rotate(-22 1475.6 387.5)"/>
<path d="M1594,283 Q1608,274 1617,292 Q1621,305 1619,310 Q1612,292 1598,290 Z" fill="#1b475a"/>
<path d="M803.3,573.3 C804.7,572.2 807.0,570.6 811.7,566.7 C816.4,562.8 824.2,556.1 831.7,550.0 C839.2,543.9 848.4,536.1 856.7,530.0 C865.0,523.9 873.4,518.6 881.7,513.3 C890.0,508.0 898.4,502.1 906.7,498.3 C915.0,494.6 923.4,492.6 931.7,490.8 C940.0,489.0 948.4,489.2 956.7,487.5 C965.0,485.8 973.4,483.4 981.7,480.8 C990.0,478.2 997.0,474.9 1006.7,471.7 C1016.4,468.5 1029.2,464.5 1040.0,461.7 C1050.8,458.9 1055.0,459.1 1071.7,455.0 C1088.4,450.9 1128.6,440.0 1140.0,437.0 C1151.4,434.0 1140.0,437.0 1140.0,437.0 L1140.0,552.0 C1131.7,554.2 1109.5,561.5 1090.0,565.0 C1070.5,568.5 1040.0,570.8 1023.3,573.3 C1006.6,575.8 998.6,577.5 990.0,580.0 C981.4,582.5 974.8,586.9 971.7,588.3 C972.8,589.9 975.1,591.2 978.0,598.0 C980.9,604.8 986.0,617.8 988.9,628.9 C991.8,640.0 994.9,656.2 995.6,664.4 C996.3,672.5 997.0,674.1 993.3,677.8 C989.6,681.5 982.9,684.5 973.3,686.7 C963.7,688.9 948.2,691.4 935.6,691.0 C923.0,690.6 908.2,687.7 897.8,684.4 C887.4,681.1 880.5,677.7 873.0,671.0 C865.5,664.3 860.0,655.8 853.0,644.0 C846.0,632.2 837.7,612.3 831.0,600.0 C824.3,587.7 816.0,575.0 813.0,570.0 L803.3,573.3 Z" fill="#286580"/>
<ellipse cx="927.8" cy="655" rx="50" ry="30" fill="#21566d"/>
<ellipse cx="927.8" cy="660" rx="45" ry="25" fill="#286580"/>
<ellipse cx="927.8" cy="661" rx="34.4" ry="19" fill="#1f4f64"/>
<ellipse cx="927.8" cy="664" rx="33.3" ry="16.5" fill="#e0ab38"/>
<path d="M898,668 L950,660 L960,668 Q940,682 910,678 Z" fill="#d6a335"/>
<ellipse cx="840" cy="553.3" rx="15" ry="7" fill="#21566d" transform="rotate(-22 840 553.3)"/>

<defs>
<linearGradient id="red" x1="0" x2="1"><stop offset="0" stop-color="#c01818"/><stop offset="0.3" stop-color="#b01313"/><stop offset="0.7" stop-color="#940e0e"/><stop offset="1" stop-color="#7a0a0a"/></linearGradient>
<linearGradient id="bolt" x1="0" x2="1"><stop offset="0" stop-color="#a8a8a8"/><stop offset="0.55" stop-color="#f6f6f6"/><stop offset="1" stop-color="#b5b5b5"/></linearGradient>
<linearGradient id="post" x1="0" x2="1"><stop offset="0" stop-color="#bdbdbd"/><stop offset="1" stop-color="#9c9c9c"/></linearGradient>
<linearGradient id="pivot" x1="0" y1="0" x2="0" y2="1"><stop offset="0" stop-color="#9fb4c0"/><stop offset="0.5" stop-color="#4a6270"/><stop offset="1" stop-color="#1e2a30"/></linearGradient>
</defs>
<!-- gray post under arm -->
<path d="M1071.5,443 L1119,452 L1121.9,486.7 Q1110,496 1098,492.6 Q1082,490 1077.4,483.7 Z" fill="url(#post)"/>
<ellipse cx="1096" cy="446" rx="25" ry="8" fill="#c9c9c9"/>
<circle cx="1098" cy="480" r="7" fill="none" stroke="#555" stroke-width="1.2"/>
<!-- clamp base plate -->
<path d="M1098.9,549.8 L1104.9,542.9 L1135.5,532 L1230,537 L1262.3,558.7 L1263.3,571.6 L1200.9,595.3 L1159.3,609.2 L1149.4,607.2 L1098.9,559.7 Z" fill="#d6d6d6"/>
<path d="M1098.9,559.7 L1149.4,607.2 L1159.3,609.2 L1200.9,595.3 L1263.3,571.6 L1263.3,581 L1200.9,605 L1159.3,619 L1149.4,617 L1098.9,569 Z" fill="#bcbcbc"/>
<g fill="#e6e6e6"><ellipse cx="1120.7" cy="549.8" rx="6" ry="4"/><ellipse cx="1144" cy="571.6" rx="6" ry="4"/><ellipse cx="1162.8" cy="589.4" rx="6" ry="4"/><ellipse cx="1242.5" cy="559.7" rx="6" ry="4"/></g>
<g fill="none" stroke="#9a9a9a" stroke-width="1"><path d="M1115,552.5 Q1120.7,555 1126.4,552.5"/><path d="M1138.3,574.3 Q1144,577 1149.7,574.3"/><path d="M1157,592 Q1162.8,595 1168.5,592"/><path d="M1236.8,562.4 Q1242.5,565 1248.2,562.4"/></g>
<path d="M1135.5,532 L1199,588.4" stroke="#333" stroke-width="1"/>
<circle cx="1205.8" cy="588.4" r="7.3" fill="#d2c49e" stroke="#5f584a" stroke-width="1"/>
<!-- clamp body (linkage) -->
<path d="M1130,435 L1160,405 L1169.8,371.9 L1198.9,379.3 L1222.6,382.2 L1236.7,400 L1236.7,418.3 L1226.7,428.3 L1216.7,453.3 L1206.7,466.7 L1216.7,493.3 L1230,530 L1231.7,540 L1220,556 L1193,556.7 L1138.3,535 L1125,516.7 L1126.7,506.7 Z" fill="#d8d8d8"/>
<!-- inner link shading -->
<path d="M1172,470 L1198,468 L1222,540 L1195,546 Z" fill="#c6c6c6"/>
<path d="M1140,470 L1165,465 L1175,520 L1150,525 Z" fill="#cfcfcf"/>
<!-- white bars -->
<path d="M1163.3,470 L1171.7,470 L1200,545 L1193.3,546.7 Z" fill="#fbfbfb"/>
<path d="M1198.3,468.3 L1205,468.3 L1230,540 L1221.7,540 Z" fill="#fbfbfb"/>
<!-- arm -->
<path d="M1040.2,353.7 L1049.3,350.5 L1054,357 L1067.4,344 L1077.8,340.7 L1083,348 L1112.8,371.9 L1128.3,384.8 L1141.3,399.1 L1151.7,392.6 L1159.4,383.5 L1169.8,371.9 L1175,400 L1160,430 L1130,445 L1092,436.7 L1072.6,423.7 L1064.8,419.8 L1040.2,391.3 Z" fill="#d3d3d3"/>
<path d="M1040.2,353.7 L1049.3,350.5 L1054,357 L1067.4,344 L1077.8,340.7 L1083,348 L1112.8,371.9 L1128.3,384.8 L1141.3,399.1 L1120,395 L1080,372 L1048,358 Z" fill="#e2e2e2"/>
<path d="M1048,358 L1080,372 L1120,395 L1141.3,399.1 L1132,420 L1040.2,380 Z" fill="#d0d0d0"/>
<path d="M1067,378 L1089,398" stroke="#555" stroke-width="1.2"/>
<!-- fingers highlights -->
<path d="M1044,355 L1050,352 L1054,355.5 L1048,358.5 Z" fill="#fafafa"/>
<path d="M1070,346 L1076,343 L1080,346.5 L1074,349.5 Z" fill="#fafafa"/>
<!-- bolt -->
<path d="M1085.6,372 L1112.8,372 L1112.8,388 L1098,392 L1085.6,388 Z" fill="#dedede"/>
<path d="M1088.2,331 Q1088.2,325.2 1097.9,325.2 Q1107.6,325.2 1107.6,331 L1107.6,379.6 L1088.2,379.6 Z" fill="url(#bolt)"/>
<g stroke="#9a9a9a" stroke-width="0.6" opacity="0.7">
<path d="M1089,335 H1095 M1089,338 H1095 M1089,341 H1095 M1089,344 H1095 M1089,347 H1095 M1089,350 H1095 M1089,353 H1095 M1089,356 H1095 M1089,359 H1095 M1089,362 H1095 M1089,365 H1095 M1089,368 H1095 M1089,371 H1095 M1089,374 H1095"/>
</g>
<!-- handle link body -->
<path d="M1160,405 L1169.8,371.9 L1198.9,379.3 L1222.6,382.2 L1236.7,400 L1236.7,418.3 L1226.7,428.3 L1216.7,453.3 L1190,460 L1165,455 Z" fill="#dfdfdf"/>
<path d="M1190,410 L1212,420 L1216,455 L1200,462 L1185,440 Z" fill="#c9c9c9"/>
<!-- black slots -->
<g fill="#111">
<rect x="1170" y="420" width="6.7" height="6.7"/>
<rect x="1181.7" y="421.7" width="8.3" height="8.3"/>
<rect x="1181.7" y="446.7" width="8.3" height="6.6"/>
<rect x="1165" y="453.3" width="5" height="5"/>
<rect x="1228.3" y="405" width="8.4" height="6.7"/>
<rect x="1215" y="405" width="6.7" height="3.3"/>
<rect x="1150" y="510" width="10" height="11.7"/>
<rect x="1138.3" y="516.7" width="5" height="5"/>
<rect x="1185" y="548.3" width="5" height="5"/>
<path d="M1194,545 L1220.7,538 L1230.6,536 L1230.6,544 L1220.7,553.8 L1194,554 Z"/>
</g>
<g fill="#fafafa">
<rect x="1181.7" y="416" width="8.3" height="5"/><rect x="1170" y="427" width="6.7" height="4"/><rect x="1228.3" y="398" width="8.4" height="6"/><rect x="1150" y="522" width="10" height="5"/>
</g>
<circle cx="1206.7" cy="441.7" r="7.5" fill="url(#pivot)"/>
<!-- red handle -->
<defs>
<radialGradient id="redg" cx="1175" cy="250" r="120" gradientUnits="userSpaceOnUse"><stop offset="0" stop-color="#d42a2a"/><stop offset="0.3" stop-color="#b81717"/><stop offset="0.65" stop-color="#9a0f0f"/><stop offset="1" stop-color="#7e0a0a"/></radialGradient>
</defs>
<path d="M1154,256 C1156,240 1170,231 1189,231 C1210,232 1223,244 1226,262 C1228,272 1227,280 1226,290 L1218,362 C1216,374 1206,381 1195,380.5 C1182,380 1172,376 1168,368 C1164,362 1163,356 1162,345 L1154,275 Z" fill="url(#redg)"/>
<path d="M1206,239 C1216,244 1222,252 1224,264 C1219,256 1213,249 1203,243 Z" fill="#ffffff" opacity="0.55"/>
<path d="M1158,270 C1160,300 1163,330 1167,355" fill="none" stroke="#e47070" stroke-width="3.2" opacity="0.6"/>
<path d="M1158,270 C1160,300 1163,330 1167,355" fill="none" stroke="#b01515" stroke-width="1.4" stroke-dasharray="2.5,2" opacity="0.7"/>

<!-- small circle markers -->
<g fill="none" stroke="#3c3c3c" stroke-width="1.2">
<circle cx="900" cy="754" r="7"/><circle cx="928" cy="823" r="7"/><circle cx="928" cy="871" r="7"/><circle cx="922" cy="887" r="7"/>
<circle cx="1087" cy="694" r="7"/><circle cx="1207" cy="720" r="7"/><circle cx="1430" cy="589" r="7"/>
</g>

<!-- axis lines on floor -->
<path d="M1420,843 L1462,868" stroke="#e06060" stroke-width="1" opacity="0.8"/>
<path d="M685,1018 L718,1001" stroke="#7ad35a" stroke-width="1" stroke-dasharray="2,1.5"/>
<path d="M1716,424 L1732,416" stroke="#7ad35a" stroke-width="1" stroke-dasharray="2,1.5"/>
<!-- axis triad -->
<g>
<path d="M625.7,973.8 L626.6,935.6" stroke="#2a2a8a" stroke-width="2.2"/>
<path d="M625.7,973.8 L659.7,955" stroke="#4a7a3a" stroke-width="2.2"/>
<path d="M625.7,973.8 L659.7,993.3" stroke="#a03030" stroke-width="2.2"/>
<circle cx="626.6" cy="935.6" r="7.2" fill="#2c2a8c"/>
<circle cx="659.7" cy="955" r="7.2" fill="#4d7d3c"/>
<circle cx="659.7" cy="993.3" r="7.2" fill="#a33232"/>
<text x="626.6" y="939.3" font-family="Liberation Sans" font-size="10" font-weight="bold" fill="#e8e8f0" text-anchor="middle">Z</text>
<text x="659.7" y="958.7" font-family="Liberation Sans" font-size="10" font-weight="bold" fill="#e8f0e8" text-anchor="middle">Y</text>
<text x="659.7" y="997" font-family="Liberation Sans" font-size="10" font-weight="bold" fill="#f0e8e8" text-anchor="middle">X</text>
</g>
<!-- nav cube -->
<defs>
<radialGradient id="navglow" cx="0.5" cy="0.5" r="0.5"><stop offset="0.55" stop-color="#e6e6e6"/><stop offset="1" stop-color="#f4f4f4" stop-opacity="0"/></radialGradient>
</defs>
<ellipse cx="1786" cy="255" rx="78" ry="78" fill="url(#navglow)"/>
<g fill="#7b7b7b">
<polygon points="1785.9,159.4 1793,170.6 1778.8,170.6"/>
<polygon points="1785.9,349.8 1793,338.6 1778.8,338.6"/>
<polygon points="1691.2,255 1701.4,248 1701.4,262.2"/>
<polygon points="1880.6,255 1869.4,248 1869.4,262.2"/>
</g>
<path d="M1709.5,211.3 A88.5,88.5 0 0 1 1742.1,177.7" fill="none" stroke="#8a8a8a" stroke-width="1.6"/>
<path d="M1829.7,177.7 A88.5,88.5 0 0 1 1862.3,211.3" fill="none" stroke="#8a8a8a" stroke-width="1.6"/>
<polygon points="1786,192.6 1842,220.5 1786,250 1729.9,220.5" fill="#f6f6f6" stroke="#d4d4d4" stroke-width="0.8"/>
<polygon points="1729.9,220.5 1786,250 1786,317.2 1733,282.6" fill="#f3f3f3" stroke="#d4d4d4" stroke-width="0.8"/>
<polygon points="1786,250 1842,220.5 1838.9,282.6 1786,317.2" fill="#f3f3f3" stroke="#d4d4d4" stroke-width="0.8"/>
<g fill="none" stroke="#dadada" stroke-width="0.7">
<polygon points="1786,199 1829,220.5 1786,243 1743,220.5"/>
<path d="M1737,228 L1737,284 M1779,252 L1779,310 M1734,226 L1779,250 M1735,276 L1779,300"/>
<path d="M1793,252 L1793,310 M1833,228 L1833,284 M1793,250 L1837,226 M1793,300 L1833,276"/>
</g>
<text font-family="Liberation Sans" font-size="10" fill="#7a7a7a" transform="translate(1776,219) rotate(27) skewX(-10)">TOP</text>
<text font-family="Liberation Sans" font-size="10.5" fill="#7a7a7a" transform="translate(1742,264) rotate(25) skewY(3)">FRONT</text>
<text font-family="Liberation Sans" font-size="10.5" fill="#7a7a7a" transform="translate(1800,282) rotate(-28)">RIGHT</text>

<!--PARTS5-->
</svg>
</div>
<div class="abs" style="left:558px;top:1043px;width:1362px;height:23px;background:rgba(250,250,250,0.82);border-top:1px solid #ededed">
<svg class="abs" style="left:0;top:0" width="1362" height="22"><rect x="4.62" y="1" width="1.1" height="12" fill="#c4c4c4"/><rect x="10.25" y="1" width="1.1" height="12" fill="#c4c4c4"/><rect x="15.88" y="1" width="1.1" height="12" fill="#c4c4c4"/><rect x="21.50" y="1" width="1.1" height="12" fill="#c4c4c4"/><rect x="27.02" y="1" width="1.3" height="17" fill="#9a9a9a"/><rect x="32.75" y="1" width="1.1" height="12" fill="#c4c4c4"/><rect x="38.38" y="1" width="1.1" height="12" fill="#c4c4c4"/><rect x="44.00" y="1" width="1.1" height="12" fill="#c4c4c4"/><rect x="49.62" y="1" width="1.1" height="12" fill="#c4c4c4"/><rect x="55.15" y="1" width="1.3" height="17" fill="#9a9a9a"/><rect x="60.88" y="1" width="1.1" height="12" fill="#c4c4c4"/><rect x="66.50" y="1" width="1.1" height="12" fill="#c4c4c4"/><rect x="72.12" y="1" width="1.1" height="12" fill="#c4c4c4"/><rect x="77.75" y="1" width="1.1" height="12" fill="#c4c4c4"/><rect x="83.28" y="1" width="1.3" height="17" fill="#9a9a9a"/><rect x="89.00" y="1" width="1.1" height="12" fill="#c4c4c4"/><rect x="94.62" y="1" width="1.1" height="12" fill="#c4c4c4"/><rect x="100.25" y="1" width="1.1" height="12" fill="#c4c4c4"/><rect x="105.88" y="1" width="1.1" height="12" fill="#c4c4c4"/><rect x="111.40" y="1" width="1.3" height="17" fill="#9a9a9a"/><rect x="117.12" y="1" width="1.1" height="12" fill="#c4c4c4"/><rect x="122.75" y="1" width="1.1" height="12" fill="#c4c4c4"/><rect x="128.38" y="1" width="1.1" height="12" fill="#c4c4c4"/><rect x="134.00" y="1" width="1.1" height="12" fill="#c4c4c4"/><rect x="139.53" y="1" width="1.3" height="17" fill="#9a9a9a"/><rect x="145.25" y="1" width="1.1" height="12" fill="#c4c4c4"/><rect x="150.88" y="1" width="1.1" height="12" fill="#c4c4c4"/><rect x="156.50" y="1" width="1.1" height="12" fill="#c4c4c4"/><rect x="162.12" y="1" width="1.1" height="12" fill="#c4c4c4"/><rect x="167.65" y="1" width="1.3" height="17" fill="#9a9a9a"/><rect x="173.38" y="1" width="1.1" height="12" fill="#c4c4c4"/><rect x="179.00" y="1" width="1.1" height="12" fill="#c4c4c4"/><rect x="184.62" y="1" width="1.1" height="12" fill="#c4c4c4"/><rect x="190.25" y="1" width="1.1" height="12" fill="#c4c4c4"/><rect x="195.78" y="1" width="1.3" height="17" fill="#9a9a9a"/><rect x="201.50" y="1" width="1.1" height="12" fill="#c4c4c4"/><rect x="207.12" y="1" width="1.1" height="12" fill="#c4c4c4"/><rect x="212.75" y="1" width="1.1" height="12" fill="#c4c4c4"/><rect x="218.38" y="1" width="1.1" height="12" fill="#c4c4c4"/><rect x="223.90" y="1" width="1.3" height="17" fill="#9a9a9a"/><rect x="229.62" y="1" width="1.1" height="12" fill="#c4c4c4"/><rect x="235.25" y="1" width="1.1" height="12" fill="#c4c4c4"/><rect x="240.88" y="1" width="1.1" height="12" fill="#c4c4c4"/><rect x="246.50" y="1" width="1.1" height="12" fill="#c4c4c4"/><rect x="252.03" y="1" width="1.3" height="17" fill="#9a9a9a"/><rect x="257.75" y="1" width="1.1" height="12" fill="#c4c4c4"/><rect x="263.38" y="1" width="1.1" height="12" fill="#c4c4c4"/><rect x="269.00" y="1" width="1.1" height="12" fill="#c4c4c4"/><rect x="274.62" y="1" width="1.1" height="12" fill="#c4c4c4"/><rect x="280.15" y="1" width="1.3" height="17" fill="#9a9a9a"/><rect x="285.88" y="1" width="1.1" height="12" fill="#c4c4c4"/><rect x="291.50" y="1" width="1.1" height="12" fill="#c4c4c4"/><rect x="297.12" y="1" width="1.1" height="12" fill="#c4c4c4"/><rect x="302.75" y="1" width="1.1" height="12" fill="#c4c4c4"/><rect x="308.27" y="1" width="1.3" height="17" fill="#9a9a9a"/><rect x="314.00" y="1" width="1.1" height="12" fill="#c4c4c4"/><rect x="319.62" y="1" width="1.1" height="12" fill="#c4c4c4"/><rect x="325.25" y="1" width="1.1" height="12" fill="#c4c4c4"/><rect x="330.88" y="1" width="1.1" height="12" fill="#c4c4c4"/><rect x="336.40" y="1" width="1.3" height="17" fill="#9a9a9a"/><rect x="342.12" y="1" width="1.1" height="12" fill="#c4c4c4"/><rect x="347.75" y="1" width="1.1" height="12" fill="#c4c4c4"/><rect x="353.38" y="1" width="1.1" height="12" fill="#c4c4c4"/><rect x="359.00" y="1" width="1.1" height="12" fill="#c4c4c4"/><rect x="364.52" y="1" width="1.3" height="17" fill="#9a9a9a"/><rect x="370.25" y="1" width="1.1" height="12" fill="#c4c4c4"/><rect x="375.88" y="1" width="1.1" height="12" fill="#c4c4c4"/><rect x="381.50" y="1" width="1.1" height="12" fill="#c4c4c4"/><rect x="387.12" y="1" width="1.1" height="12" fill="#c4c4c4"/><rect x="392.65" y="1" width="1.3" height="17" fill="#9a9a9a"/><rect x="398.38" y="1" width="1.1" height="12" fill="#c4c4c4"/><rect x="404.00" y="1" width="1.1" height="12" fill="#c4c4c4"/><rect x="409.62" y="1" width="1.1" height="12" fill="#c4c4c4"/><rect x="415.25" y="1" width="1.1" height="12" fill="#c4c4c4"/><rect x="420.77" y="1" width="1.3" height="17" fill="#9a9a9a"/><rect x="426.50" y="1" width="1.1" height="12" fill="#c4c4c4"/><rect x="432.12" y="1" width="1.1" height="12" fill="#c4c4c4"/><rect x="437.75" y="1" width="1.1" height="12" fill="#c4c4c4"/><rect x="443.38" y="1" width="1.1" height="12" fill="#c4c4c4"/><rect x="448.90" y="1" width="1.3" height="17" fill="#9a9a9a"/><rect x="454.62" y="1" width="1.1" height="12" fill="#c4c4c4"/><rect x="460.25" y="1" width="1.1" height="12" fill="#c4c4c4"/><rect x="465.88" y="1" width="1.1" height="12" fill="#c4c4c4"/><rect x="471.50" y="1" width="1.1" height="12" fill="#c4c4c4"/><rect x="477.02" y="1" width="1.3" height="17" fill="#9a9a9a"/><rect x="482.75" y="1" width="1.1" height="12" fill="#c4c4c4"/><rect x="488.38" y="1" width="1.1" height="12" fill="#c4c4c4"/><rect x="494.00" y="1" width="1.1" height="12" fill="#c4c4c4"/><rect x="499.62" y="1" width="1.1" height="12" fill="#c4c4c4"/><rect x="505.15" y="1" width="1.3" height="17" fill="#9a9a9a"/><rect x="510.88" y="1" width="1.1" height="12" fill="#c4c4c4"/><rect x="516.50" y="1" width="1.1" height="12" fill="#c4c4c4"/><rect x="522.12" y="1" width="1.1" height="12" fill="#c4c4c4"/><rect x="527.75" y="1" width="1.1" height="12" fill="#c4c4c4"/><rect x="533.27" y="1" width="1.3" height="17" fill="#9a9a9a"/><rect x="539.00" y="1" width="1.1" height="12" fill="#c4c4c4"/><rect x="544.62" y="1" width="1.1" height="12" fill="#c4c4c4"/><rect x="550.25" y="1" width="1.1" height="12" fill="#c4c4c4"/><rect x="555.88" y="1" width="1.1" height="12" fill="#c4c4c4"/><rect x="561.40" y="1" width="1.3" height="17" fill="#9a9a9a"/><rect x="567.12" y="1" width="1.1" height="12" fill="#c4c4c4"/><rect x="572.75" y="1" width="1.1" height="12" fill="#c4c4c4"/><rect x="578.38" y="1" width="1.1" height="12" fill="#c4c4c4"/><rect x="584.00" y="1" width="1.1" height="12" fill="#c4c4c4"/><rect x="589.52" y="1" width="1.3" height="17" fill="#9a9a9a"/><rect x="595.25" y="1" width="1.1" height="12" fill="#c4c4c4"/><rect x="600.88" y="1" width="1.1" height="12" fill="#c4c4c4"/><rect x="606.50" y="1" width="1.1" height="12" fill="#c4c4c4"/><rect x="612.12" y="1" width="1.1" height="12" fill="#c4c4c4"/><rect x="617.65" y="1" width="1.3" height="17" fill="#9a9a9a"/><rect x="623.38" y="1" width="1.1" height="12" fill="#c4c4c4"/><rect x="629.00" y="1" width="1.1" height="12" fill="#c4c4c4"/><rect x="634.62" y="1" width="1.1" height="12" fill="#c4c4c4"/><rect x="640.25" y="1" width="1.1" height="12" fill="#c4c4c4"/><rect x="645.77" y="1" width="1.3" height="17" fill="#9a9a9a"/><rect x="651.50" y="1" width="1.1" height="12" fill="#c4c4c4"/><rect x="657.12" y="1" width="1.1" height="12" fill="#c4c4c4"/><rect x="662.75" y="1" width="1.1" height="12" fill="#c4c4c4"/><rect x="668.38" y="1" width="1.1" height="12" fill="#c4c4c4"/><rect x="673.90" y="1" width="1.3" height="17" fill="#9a9a9a"/><rect x="679.62" y="1" width="1.1" height="12" fill="#c4c4c4"/><rect x="685.25" y="1" width="1.1" height="12" fill="#c4c4c4"/><rect x="690.88" y="1" width="1.1" height="12" fill="#c4c4c4"/><rect x="696.50" y="1" width="1.1" height="12" fill="#c4c4c4"/><rect x="702.02" y="1" width="1.3" height="17" fill="#9a9a9a"/><rect x="707.75" y="1" width="1.1" height="12" fill="#c4c4c4"/><rect x="713.38" y="1" width="1.1" height="12" fill="#c4c4c4"/><rect x="719.00" y="1" width="1.1" height="12" fill="#c4c4c4"/><rect x="724.62" y="1" width="1.1" height="12" fill="#c4c4c4"/><rect x="730.15" y="1" width="1.3" height="17" fill="#9a9a9a"/><rect x="735.88" y="1" width="1.1" height="12" fill="#c4c4c4"/><rect x="741.50" y="1" width="1.1" height="12" fill="#c4c4c4"/><rect x="747.12" y="1" width="1.1" height="12" fill="#c4c4c4"/><rect x="752.75" y="1" width="1.1" height="12" fill="#c4c4c4"/><rect x="758.27" y="1" width="1.3" height="17" fill="#9a9a9a"/><rect x="764.00" y="1" width="1.1" height="12" fill="#c4c4c4"/><rect x="769.62" y="1" width="1.1" height="12" fill="#c4c4c4"/><rect x="775.25" y="1" width="1.1" height="12" fill="#c4c4c4"/><rect x="780.88" y="1" width="1.1" height="12" fill="#c4c4c4"/><rect x="786.40" y="1" width="1.3" height="17" fill="#9a9a9a"/><rect x="792.12" y="1" width="1.1" height="12" fill="#c4c4c4"/><rect x="797.75" y="1" width="1.1" height="12" fill="#c4c4c4"/><rect x="803.38" y="1" width="1.1" height="12" fill="#c4c4c4"/><rect x="809.00" y="1" width="1.1" height="12" fill="#c4c4c4"/><rect x="814.52" y="1" width="1.3" height="17" fill="#9a9a9a"/><rect x="820.25" y="1" width="1.1" height="12" fill="#c4c4c4"/><rect x="825.88" y="1" width="1.1" height="12" fill="#c4c4c4"/><rect x="831.50" y="1" width="1.1" height="12" fill="#c4c4c4"/><rect x="837.12" y="1" width="1.1" height="12" fill="#c4c4c4"/><rect x="842.65" y="1" width="1.3" height="17" fill="#9a9a9a"/><rect x="848.38" y="1" width="1.1" height="12" fill="#c4c4c4"/><rect x="854.00" y="1" width="1.1" height="12" fill="#c4c4c4"/><rect x="859.62" y="1" width="1.1" height="12" fill="#c4c4c4"/><rect x="865.25" y="1" width="1.1" height="12" fill="#c4c4c4"/><rect x="870.77" y="1" width="1.3" height="17" fill="#9a9a9a"/><rect x="876.50" y="1" width="1.1" height="12" fill="#c4c4c4"/><rect x="882.12" y="1" width="1.1" height="12" fill="#c4c4c4"/><rect x="887.75" y="1" width="1.1" height="12" fill="#c4c4c4"/><rect x="893.38" y="1" width="1.1" height="12" fill="#c4c4c4"/><rect x="898.90" y="1" width="1.3" height="17" fill="#9a9a9a"/><rect x="904.62" y="1" width="1.1" height="12" fill="#c4c4c4"/><rect x="910.25" y="1" width="1.1" height="12" fill="#c4c4c4"/><rect x="915.88" y="1" width="1.1" height="12" fill="#c4c4c4"/><rect x="921.50" y="1" width="1.1" height="12" fill="#c4c4c4"/><rect x="927.02" y="1" width="1.3" height="17" fill="#9a9a9a"/><rect x="932.75" y="1" width="1.1" height="12" fill="#c4c4c4"/><rect x="938.38" y="1" width="1.1" height="12" fill="#c4c4c4"/><rect x="944.00" y="1" width="1.1" height="12" fill="#c4c4c4"/><rect x="949.62" y="1" width="1.1" height="12" fill="#c4c4c4"/><rect x="955.15" y="1" width="1.3" height="17" fill="#9a9a9a"/><rect x="960.88" y="1" width="1.1" height="12" fill="#c4c4c4"/><rect x="966.50" y="1" width="1.1" height="12" fill="#c4c4c4"/><rect x="972.12" y="1" width="1.1" height="12" fill="#c4c4c4"/><rect x="977.75" y="1" width="1.1" height="12" fill="#c4c4c4"/><rect x="983.27" y="1" width="1.3" height="17" fill="#9a9a9a"/><rect x="989.00" y="1" width="1.1" height="12" fill="#c4c4c4"/><rect x="994.62" y="1" width="1.1" height="12" fill="#c4c4c4"/><rect x="1000.25" y="1" width="1.1" height="12" fill="#c4c4c4"/><rect x="1005.88" y="1" width="1.1" height="12" fill="#c4c4c4"/><rect x="1011.40" y="1" width="1.3" height="17" fill="#9a9a9a"/><rect x="1017.12" y="1" width="1.1" height="12" fill="#c4c4c4"/><rect x="1022.75" y="1" width="1.1" height="12" fill="#c4c4c4"/><rect x="1028.38" y="1" width="1.1" height="12" fill="#c4c4c4"/><rect x="1034.00" y="1" width="1.1" height="12" fill="#c4c4c4"/><rect x="1039.53" y="1" width="1.3" height="17" fill="#9a9a9a"/><rect x="1045.25" y="1" width="1.1" height="12" fill="#c4c4c4"/><rect x="1050.88" y="1" width="1.1" height="12" fill="#c4c4c4"/><rect x="1056.50" y="1" width="1.1" height="12" fill="#c4c4c4"/><rect x="1062.12" y="1" width="1.1" height="12" fill="#c4c4c4"/><rect x="1067.65" y="1" width="1.3" height="17" fill="#9a9a9a"/><rect x="1073.38" y="1" width="1.1" height="12" fill="#c4c4c4"/><rect x="1079.00" y="1" width="1.1" height="12" fill="#c4c4c4"/><rect x="1084.62" y="1" width="1.1" height="12" fill="#c4c4c4"/><rect x="1090.25" y="1" width="1.1" height="12" fill="#c4c4c4"/><rect x="1095.78" y="1" width="1.3" height="17" fill="#9a9a9a"/><rect x="1101.50" y="1" width="1.1" height="12" fill="#c4c4c4"/><rect x="1107.12" y="1" width="1.1" height="12" fill="#c4c4c4"/><rect x="1112.75" y="1" width="1.1" height="12" fill="#c4c4c4"/><rect x="1118.38" y="1" width="1.1" height="12" fill="#c4c4c4"/><rect x="1123.90" y="1" width="1.3" height="17" fill="#9a9a9a"/><rect x="1129.62" y="1" width="1.1" height="12" fill="#c4c4c4"/><rect x="1135.25" y="1" width="1.1" height="12" fill="#c4c4c4"/><rect x="1140.88" y="1" width="1.1" height="12" fill="#c4c4c4"/><rect x="1146.50" y="1" width="1.1" height="12" fill="#c4c4c4"/><rect x="1152.03" y="1" width="1.3" height="17" fill="#9a9a9a"/><rect x="1157.75" y="1" width="1.1" height="12" fill="#c4c4c4"/><rect x="1163.38" y="1" width="1.1" height="12" fill="#c4c4c4"/><rect x="1169.00" y="1" width="1.1" height="12" fill="#c4c4c4"/><rect x="1174.62" y="1" width="1.1" height="12" fill="#c4c4c4"/><rect x="1180.15" y="1" width="1.3" height="17" fill="#9a9a9a"/><rect x="1185.88" y="1" width="1.1" height="12" fill="#c4c4c4"/><rect x="1191.50" y="1" width="1.1" height="12" fill="#c4c4c4"/><rect x="1197.12" y="1" width="1.1" height="12" fill="#c4c4c4"/><rect x="1202.75" y="1" width="1.1" height="12" fill="#c4c4c4"/><rect x="1208.28" y="1" width="1.3" height="17" fill="#9a9a9a"/><rect x="1214.00" y="1" width="1.1" height="12" fill="#c4c4c4"/><rect x="1219.62" y="1" width="1.1" height="12" fill="#c4c4c4"/><rect x="1225.25" y="1" width="1.1" height="12" fill="#c4c4c4"/><rect x="1230.88" y="1" width="1.1" height="12" fill="#c4c4c4"/><rect x="1236.40" y="1" width="1.3" height="17" fill="#9a9a9a"/><rect x="1242.12" y="1" width="1.1" height="12" fill="#c4c4c4"/><rect x="1247.75" y="1" width="1.1" height="12" fill="#c4c4c4"/><rect x="1253.38" y="1" width="1.1" height="12" fill="#c4c4c4"/><rect x="1259.00" y="1" width="1.1" height="12" fill="#c4c4c4"/><rect x="1264.53" y="1" width="1.3" height="17" fill="#9a9a9a"/><rect x="1270.25" y="1" width="1.1" height="12" fill="#c4c4c4"/><rect x="1275.88" y="1" width="1.1" height="12" fill="#c4c4c4"/><rect x="1281.50" y="1" width="1.1" height="12" fill="#c4c4c4"/><rect x="1287.12" y="1" width="1.1" height="12" fill="#c4c4c4"/><rect x="1292.65" y="1" width="1.3" height="17" fill="#9a9a9a"/><rect x="1298.38" y="1" width="1.1" height="12" fill="#c4c4c4"/><rect x="1304.00" y="1" width="1.1" height="12" fill="#c4c4c4"/><rect x="1309.62" y="1" width="1.1" height="12" fill="#c4c4c4"/><rect x="1315.25" y="1" width="1.1" height="12" fill="#c4c4c4"/><rect x="1320.78" y="1" width="1.3" height="17" fill="#9a9a9a"/><rect x="1326.50" y="1" width="1.1" height="12" fill="#c4c4c4"/><rect x="1332.12" y="1" width="1.1" height="12" fill="#c4c4c4"/><rect x="1337.75" y="1" width="1.1" height="12" fill="#c4c4c4"/><rect x="1343.38" y="1" width="1.1" height="12" fill="#c4c4c4"/><rect x="1348.90" y="1" width="1.3" height="17" fill="#9a9a9a"/><rect x="1354.62" y="1" width="1.1" height="12" fill="#c4c4c4"/><rect x="1360.25" y="1" width="1.1" height="12" fill="#c4c4c4"/></svg></div>
<div class="abs" style="left:558px;top:1066px;width:1362px;height:14px;background:#000"></div>
<svg class="abs" style="left:0;top:0;pointer-events:none" width="1920" height="1080"><g transform="translate(558,0)"><text x="140.1" y="1075.5" text-anchor="middle" font-size="12.5" font-weight="bold" fill="#e6e6e6" font-family="Liberation Sans">50</text><text x="280.8" y="1075.5" text-anchor="middle" font-size="12.5" font-weight="bold" fill="#e6e6e6" font-family="Liberation Sans">100</text><text x="421.4" y="1075.5" text-anchor="middle" font-size="12.5" font-weight="bold" fill="#e6e6e6" font-family="Liberation Sans">150</text><text x="562.0" y="1075.5" text-anchor="middle" font-size="12.5" font-weight="bold" fill="#e6e6e6" font-family="Liberation Sans">200</text><text x="702.6" y="1075.5" text-anchor="middle" font-size="12.5" font-weight="bold" fill="#e6e6e6" font-family="Liberation Sans">250</text><text x="843.2" y="1075.5" text-anchor="middle" font-size="12.5" font-weight="bold" fill="#e6e6e6" font-family="Liberation Sans">300</text><text x="983.9" y="1075.5" text-anchor="middle" font-size="12.5" font-weight="bold" fill="#e6e6e6" font-family="Liberation Sans">350</text><text x="1124.5" y="1075.5" text-anchor="middle" font-size="12.5" font-weight="bold" fill="#e6e6e6" font-family="Liberation Sans">400</text><text x="1265.1" y="1075.5" text-anchor="middle" font-size="12.5" font-weight="bold" fill="#e6e6e6" font-family="Liberation Sans">450</text></g></svg>
<div class="abs" style="left:1870px;top:1066px;width:50px;height:14px;background:#0c2538;color:#2f7aa5;font-size:14px;line-height:14px;text-align:center;padding-left:4px">mm</div>

</body></html>
